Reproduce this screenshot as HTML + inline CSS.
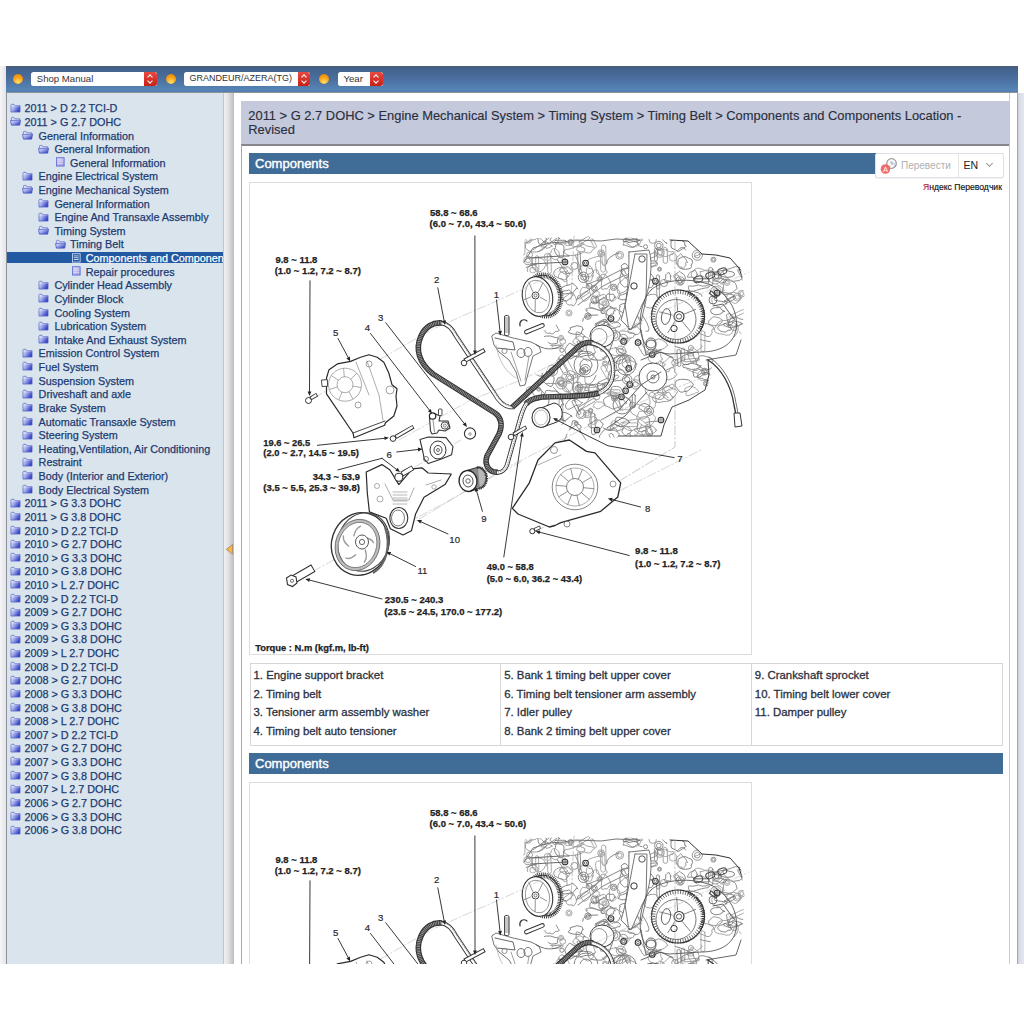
<!DOCTYPE html>
<html><head><meta charset="utf-8">
<style>
*{margin:0;padding:0;box-sizing:border-box}
html,body{width:1024px;height:1024px;background:#fff;overflow:hidden;font-family:"Liberation Sans",sans-serif;position:relative}
#leftedge{position:absolute;left:0;top:66px;width:6px;height:898px;background:linear-gradient(90deg,#f6f6f8,#e4e4e8)}
#toolbar{position:absolute;left:6px;top:66px;width:1012px;height:27px;background:linear-gradient(180deg,#4a5b70 0%,#41618a 8%,#4a6d9c 45%,#5585b6 92%,#5080b0 100%);border-bottom:1.5px solid #8e9196}
.orb{position:absolute;width:10px;height:10px;border-radius:50%;background:radial-gradient(circle at 50% 80%,#ffe070 0%,#f9a820 45%,#e07a00 100%);top:7.6px;box-shadow:0 0 1px rgba(0,0,0,.3)}
.sel-box{position:absolute;top:6px;height:13.5px;background:#fff;border-radius:2.5px;font-size:10px;color:#333;line-height:13.5px;padding-left:6px;white-space:nowrap;overflow:hidden}
.sel-box b{position:absolute;right:0;top:0;width:12.5px;height:13.5px;background:linear-gradient(180deg,#e9493e,#c52119);border-radius:0 2.5px 2.5px 0}
.sel-box b:before{content:"";position:absolute;left:4px;top:3px;width:3px;height:3px;border-left:1.1px solid #fff;border-top:1.1px solid #fff;transform:rotate(45deg)}
.sel-box b:after{content:"";position:absolute;left:4px;top:6.5px;width:3px;height:3px;border-right:1.1px solid #fff;border-bottom:1.1px solid #fff;transform:rotate(45deg)}
#sidebar{position:absolute;left:6px;top:93px;width:217px;height:870.5px;background:#dae4ec;border-left:1px solid #8d949c;overflow:hidden}
.row{position:absolute;left:0;width:217px;height:13.6px}
.row span{position:absolute;top:1.1px;font-size:10.8px;line-height:13.6px;color:#1b3b72;white-space:nowrap;-webkit-text-stroke:0.25px #1b3b72}
.row.sel{background:#2159a3;height:11px;margin-top:1.3px}
.row.sel span{color:#fff;-webkit-text-stroke:0.25px #fff;top:0.1px}
.row .ic{position:absolute;top:1.5px}
.row.sel .ic{top:0.2px}
#splitter{position:absolute;left:223px;top:93px;width:11px;height:870.5px;background:linear-gradient(90deg,#9ca1a8 0,#f0f0f2 10%,#e4e4e7 45%,#bcbcc1 100%)}
#content{position:absolute;left:241px;top:93px;width:769px;height:870.5px;background:#fff;border-right:1px solid #cacacc;overflow:hidden}
#cline{position:absolute;left:241px;top:145px;width:1px;height:818.5px;background:#a9a9ab}
#rightbar{position:absolute;left:1017px;top:93px;width:7px;height:870.5px;background:linear-gradient(90deg,#8e9298 0,#d8dce4 25%,#e3e6ee 100%)}
#hdr{position:absolute;left:0.3px;top:8px;width:768.7px;height:45px;background:#c4c9dc;border-bottom:2px solid #86878d;font-size:12.9px;line-height:14.3px;color:#2b2f3d;padding:7.5px 0 0 7px;-webkit-text-stroke:0.15px #2b2f3d}
.bar{position:absolute;left:8px;width:753.5px;height:21px;background:#3f6d97;color:#fff;font-size:13px;line-height:21px;padding-left:6px;-webkit-text-stroke:0.4px #fff}
.imgbox{position:absolute;left:8px;width:503px;height:473px;border:1px solid #dcdcdc;overflow:hidden;background:#fff}
table.parts{position:absolute;left:8.5px;top:569.5px;width:753px;height:83px;border-collapse:collapse;border:1px solid #d6d6d6}
table.parts td{vertical-align:top;border:1px solid #d6d6d6;font-size:11.4px;color:#2c3140;line-height:18.6px;padding:2.8px 0 0 3px;width:251px;-webkit-text-stroke:0.3px #2c3140}
#yw{position:absolute;left:634px;top:59.5px;width:128.5px;height:25.5px;background:#fff;border:1px solid #dde0e6;border-radius:2px;box-shadow:0 1px 1px rgba(0,0,0,.05)}
#yw .dv{position:absolute;left:82px;top:0;width:1px;height:23px;background:#e3e3e3}
#yw .tr{position:absolute;left:25px;top:0;line-height:23px;font-size:10px;color:#b0b0b0}
#yw .en{position:absolute;left:87.5px;top:0;line-height:23px;font-size:10.5px;color:#222}
#yw .chev{position:absolute;left:111px;top:7.5px;width:5px;height:5px;border-right:1px solid #999;border-bottom:1px solid #999;transform:rotate(45deg)}
#yn{position:absolute;left:682px;top:89px;font-size:8.6px;color:#111;-webkit-text-stroke:0.15px #111;white-space:nowrap}
#yn b{color:#f33;font-weight:normal}
.dg{position:absolute;left:-249.5px;top:-182.4px;font-family:"Liberation Sans",sans-serif}
</style></head><body>
<svg width="0" height="0" style="position:absolute">
 <defs>
  <linearGradient id="gfc" x1="0" y1="0" x2="1" y2="0.6"><stop offset="0" stop-color="#f2f3fd"/><stop offset="0.45" stop-color="#a6afe8"/><stop offset="1" stop-color="#3342c4"/></linearGradient>
  <linearGradient id="gfo" x1="0" y1="0" x2="1" y2="0.8"><stop offset="0" stop-color="#eef0fc"/><stop offset="0.5" stop-color="#9aa4e6"/><stop offset="1" stop-color="#3040c0"/></linearGradient>
  <linearGradient id="gdc" x1="0" y1="0" x2="1" y2="1"><stop offset="0" stop-color="#d7d6f4"/><stop offset="1" stop-color="#9d95dc"/></linearGradient>
 </defs>
 <symbol id="ifc" viewBox="0 0 12 11"><path d="M1,2.2 L1,10 L11,10 L11,2.8 L5,2.8 L4.2,1.4 L1.6,1.4 Z" fill="url(#gfc)" stroke="#5563cc" stroke-width="0.8"/><path d="M1.2,3.2 H10.8" stroke="#fff" stroke-width="0.6" opacity=".7"/></symbol>
 <symbol id="ifo" viewBox="0 0 12 11"><path d="M1.5,2 L1.5,9.8 L10.5,9.8 L10.5,3 L5,3 L4.3,1.5 L2,1.5 Z" fill="#dfe3f8" stroke="#6470cc" stroke-width="0.8"/><path d="M0.4,5 L11.6,4.4 L10.6,10 L1.6,10 Z" fill="url(#gfo)" stroke="#4a58c6" stroke-width="0.8"/></symbol>
 <symbol id="idc" viewBox="0 0 12 11"><rect x="1.5" y="0.8" width="8.5" height="9.2" fill="url(#gdc)" stroke="#5a6cd6" stroke-width="0.9"/><path d="M3,3.2 H8.5 M3,5.2 H8.5 M3,7.2 H8.5" stroke="#eceaff" stroke-width="0.7"/></symbol>
 <symbol id="ids" viewBox="0 0 12 11"><rect x="1.5" y="0.8" width="8.5" height="9.2" fill="none" stroke="#d8dcff" stroke-width="0.9"/><path d="M3,3.2 H8.5 M3,5.2 H8.5 M3,7.2 H8.5" stroke="#fff" stroke-width="0.8"/></symbol>
</svg>
<div id="leftedge"></div>
<div id="toolbar">
  <div class="orb" style="left:7px"></div>
  <div class="sel-box" style="left:25px;width:125.5px;padding-left:5.8px;font-size:9.6px">Shop Manual<b></b></div>
  <div class="orb" style="left:159.5px"></div>
  <div class="sel-box" style="left:178px;width:126px;padding-left:5.5px;font-size:9px">GRANDEUR/AZERA(TG)<b></b></div>
  <div class="orb" style="left:313px"></div>
  <div class="sel-box" style="left:331.5px;width:45px;padding-left:6px;font-size:9.6px">Year<b></b></div>
</div>
<div id="sidebar">
<div class="row" style="top:8.20px"><svg class="ic" style="left:3.4px" width="11" height="10" viewBox="0 0 12 11"><use href="#ifc"/></svg><span style="left:17.4px">2011 &gt; D 2.2 TCI-D</span></div>
<div class="row" style="top:21.82px"><svg class="ic" style="left:3.4px" width="11" height="10" viewBox="0 0 12 11"><use href="#ifo"/></svg><span style="left:17.4px">2011 &gt; G 2.7 DOHC</span></div>
<div class="row" style="top:35.44px"><svg class="ic" style="left:15.3px" width="11" height="10" viewBox="0 0 12 11"><use href="#ifo"/></svg><span style="left:31.6px">General Information</span></div>
<div class="row" style="top:49.06px"><svg class="ic" style="left:31.0px" width="11" height="10" viewBox="0 0 12 11"><use href="#ifo"/></svg><span style="left:47.4px">General Information</span></div>
<div class="row" style="top:62.68px"><svg class="ic" style="left:47.9px" width="11" height="10" viewBox="0 0 12 11"><use href="#idc"/></svg><span style="left:63.1px">General Information</span></div>
<div class="row" style="top:76.30px"><svg class="ic" style="left:15.3px" width="11" height="10" viewBox="0 0 12 11"><use href="#ifc"/></svg><span style="left:31.6px">Engine Electrical System</span></div>
<div class="row" style="top:89.92px"><svg class="ic" style="left:15.3px" width="11" height="10" viewBox="0 0 12 11"><use href="#ifo"/></svg><span style="left:31.6px">Engine Mechanical System</span></div>
<div class="row" style="top:103.54px"><svg class="ic" style="left:31.0px" width="11" height="10" viewBox="0 0 12 11"><use href="#ifc"/></svg><span style="left:47.4px">General Information</span></div>
<div class="row" style="top:117.16px"><svg class="ic" style="left:31.0px" width="11" height="10" viewBox="0 0 12 11"><use href="#ifc"/></svg><span style="left:47.4px">Engine And Transaxle Assembly</span></div>
<div class="row" style="top:130.78px"><svg class="ic" style="left:31.0px" width="11" height="10" viewBox="0 0 12 11"><use href="#ifo"/></svg><span style="left:47.4px">Timing System</span></div>
<div class="row" style="top:144.40px"><svg class="ic" style="left:47.9px" width="11" height="10" viewBox="0 0 12 11"><use href="#ifo"/></svg><span style="left:63.1px">Timing Belt</span></div>
<div class="row sel" style="top:158.02px"><svg class="ic" style="left:64.3px" width="11" height="10" viewBox="0 0 12 11"><use href="#ids"/></svg><span style="left:78.8px">Components and Components Location - Revised</span></div>
<div class="row" style="top:171.64px"><svg class="ic" style="left:64.3px" width="11" height="10" viewBox="0 0 12 11"><use href="#idc"/></svg><span style="left:78.8px">Repair procedures</span></div>
<div class="row" style="top:185.26px"><svg class="ic" style="left:31.0px" width="11" height="10" viewBox="0 0 12 11"><use href="#ifc"/></svg><span style="left:47.4px">Cylinder Head Assembly</span></div>
<div class="row" style="top:198.88px"><svg class="ic" style="left:31.0px" width="11" height="10" viewBox="0 0 12 11"><use href="#ifc"/></svg><span style="left:47.4px">Cylinder Block</span></div>
<div class="row" style="top:212.50px"><svg class="ic" style="left:31.0px" width="11" height="10" viewBox="0 0 12 11"><use href="#ifc"/></svg><span style="left:47.4px">Cooling System</span></div>
<div class="row" style="top:226.12px"><svg class="ic" style="left:31.0px" width="11" height="10" viewBox="0 0 12 11"><use href="#ifc"/></svg><span style="left:47.4px">Lubrication System</span></div>
<div class="row" style="top:239.74px"><svg class="ic" style="left:31.0px" width="11" height="10" viewBox="0 0 12 11"><use href="#ifc"/></svg><span style="left:47.4px">Intake And Exhaust System</span></div>
<div class="row" style="top:253.36px"><svg class="ic" style="left:15.3px" width="11" height="10" viewBox="0 0 12 11"><use href="#ifc"/></svg><span style="left:31.6px">Emission Control System</span></div>
<div class="row" style="top:266.98px"><svg class="ic" style="left:15.3px" width="11" height="10" viewBox="0 0 12 11"><use href="#ifc"/></svg><span style="left:31.6px">Fuel System</span></div>
<div class="row" style="top:280.60px"><svg class="ic" style="left:15.3px" width="11" height="10" viewBox="0 0 12 11"><use href="#ifc"/></svg><span style="left:31.6px">Suspension System</span></div>
<div class="row" style="top:294.22px"><svg class="ic" style="left:15.3px" width="11" height="10" viewBox="0 0 12 11"><use href="#ifc"/></svg><span style="left:31.6px">Driveshaft and axle</span></div>
<div class="row" style="top:307.84px"><svg class="ic" style="left:15.3px" width="11" height="10" viewBox="0 0 12 11"><use href="#ifc"/></svg><span style="left:31.6px">Brake System</span></div>
<div class="row" style="top:321.46px"><svg class="ic" style="left:15.3px" width="11" height="10" viewBox="0 0 12 11"><use href="#ifc"/></svg><span style="left:31.6px">Automatic Transaxle System</span></div>
<div class="row" style="top:335.08px"><svg class="ic" style="left:15.3px" width="11" height="10" viewBox="0 0 12 11"><use href="#ifc"/></svg><span style="left:31.6px">Steering System</span></div>
<div class="row" style="top:348.70px"><svg class="ic" style="left:15.3px" width="11" height="10" viewBox="0 0 12 11"><use href="#ifc"/></svg><span style="left:31.6px">Heating,Ventilation, Air Conditioning</span></div>
<div class="row" style="top:362.32px"><svg class="ic" style="left:15.3px" width="11" height="10" viewBox="0 0 12 11"><use href="#ifc"/></svg><span style="left:31.6px">Restraint</span></div>
<div class="row" style="top:375.94px"><svg class="ic" style="left:15.3px" width="11" height="10" viewBox="0 0 12 11"><use href="#ifc"/></svg><span style="left:31.6px">Body (Interior and Exterior)</span></div>
<div class="row" style="top:389.56px"><svg class="ic" style="left:15.3px" width="11" height="10" viewBox="0 0 12 11"><use href="#ifc"/></svg><span style="left:31.6px">Body Electrical System</span></div>
<div class="row" style="top:403.18px"><svg class="ic" style="left:3.4px" width="11" height="10" viewBox="0 0 12 11"><use href="#ifc"/></svg><span style="left:17.4px">2011 &gt; G 3.3 DOHC</span></div>
<div class="row" style="top:416.80px"><svg class="ic" style="left:3.4px" width="11" height="10" viewBox="0 0 12 11"><use href="#ifc"/></svg><span style="left:17.4px">2011 &gt; G 3.8 DOHC</span></div>
<div class="row" style="top:430.42px"><svg class="ic" style="left:3.4px" width="11" height="10" viewBox="0 0 12 11"><use href="#ifc"/></svg><span style="left:17.4px">2010 &gt; D 2.2 TCI-D</span></div>
<div class="row" style="top:444.04px"><svg class="ic" style="left:3.4px" width="11" height="10" viewBox="0 0 12 11"><use href="#ifc"/></svg><span style="left:17.4px">2010 &gt; G 2.7 DOHC</span></div>
<div class="row" style="top:457.66px"><svg class="ic" style="left:3.4px" width="11" height="10" viewBox="0 0 12 11"><use href="#ifc"/></svg><span style="left:17.4px">2010 &gt; G 3.3 DOHC</span></div>
<div class="row" style="top:471.28px"><svg class="ic" style="left:3.4px" width="11" height="10" viewBox="0 0 12 11"><use href="#ifc"/></svg><span style="left:17.4px">2010 &gt; G 3.8 DOHC</span></div>
<div class="row" style="top:484.90px"><svg class="ic" style="left:3.4px" width="11" height="10" viewBox="0 0 12 11"><use href="#ifc"/></svg><span style="left:17.4px">2010 &gt; L 2.7 DOHC</span></div>
<div class="row" style="top:498.52px"><svg class="ic" style="left:3.4px" width="11" height="10" viewBox="0 0 12 11"><use href="#ifc"/></svg><span style="left:17.4px">2009 &gt; D 2.2 TCI-D</span></div>
<div class="row" style="top:512.14px"><svg class="ic" style="left:3.4px" width="11" height="10" viewBox="0 0 12 11"><use href="#ifc"/></svg><span style="left:17.4px">2009 &gt; G 2.7 DOHC</span></div>
<div class="row" style="top:525.76px"><svg class="ic" style="left:3.4px" width="11" height="10" viewBox="0 0 12 11"><use href="#ifc"/></svg><span style="left:17.4px">2009 &gt; G 3.3 DOHC</span></div>
<div class="row" style="top:539.38px"><svg class="ic" style="left:3.4px" width="11" height="10" viewBox="0 0 12 11"><use href="#ifc"/></svg><span style="left:17.4px">2009 &gt; G 3.8 DOHC</span></div>
<div class="row" style="top:553.00px"><svg class="ic" style="left:3.4px" width="11" height="10" viewBox="0 0 12 11"><use href="#ifc"/></svg><span style="left:17.4px">2009 &gt; L 2.7 DOHC</span></div>
<div class="row" style="top:566.62px"><svg class="ic" style="left:3.4px" width="11" height="10" viewBox="0 0 12 11"><use href="#ifc"/></svg><span style="left:17.4px">2008 &gt; D 2.2 TCI-D</span></div>
<div class="row" style="top:580.24px"><svg class="ic" style="left:3.4px" width="11" height="10" viewBox="0 0 12 11"><use href="#ifc"/></svg><span style="left:17.4px">2008 &gt; G 2.7 DOHC</span></div>
<div class="row" style="top:593.86px"><svg class="ic" style="left:3.4px" width="11" height="10" viewBox="0 0 12 11"><use href="#ifc"/></svg><span style="left:17.4px">2008 &gt; G 3.3 DOHC</span></div>
<div class="row" style="top:607.48px"><svg class="ic" style="left:3.4px" width="11" height="10" viewBox="0 0 12 11"><use href="#ifc"/></svg><span style="left:17.4px">2008 &gt; G 3.8 DOHC</span></div>
<div class="row" style="top:621.10px"><svg class="ic" style="left:3.4px" width="11" height="10" viewBox="0 0 12 11"><use href="#ifc"/></svg><span style="left:17.4px">2008 &gt; L 2.7 DOHC</span></div>
<div class="row" style="top:634.72px"><svg class="ic" style="left:3.4px" width="11" height="10" viewBox="0 0 12 11"><use href="#ifc"/></svg><span style="left:17.4px">2007 &gt; D 2.2 TCI-D</span></div>
<div class="row" style="top:648.34px"><svg class="ic" style="left:3.4px" width="11" height="10" viewBox="0 0 12 11"><use href="#ifc"/></svg><span style="left:17.4px">2007 &gt; G 2.7 DOHC</span></div>
<div class="row" style="top:661.96px"><svg class="ic" style="left:3.4px" width="11" height="10" viewBox="0 0 12 11"><use href="#ifc"/></svg><span style="left:17.4px">2007 &gt; G 3.3 DOHC</span></div>
<div class="row" style="top:675.58px"><svg class="ic" style="left:3.4px" width="11" height="10" viewBox="0 0 12 11"><use href="#ifc"/></svg><span style="left:17.4px">2007 &gt; G 3.8 DOHC</span></div>
<div class="row" style="top:689.20px"><svg class="ic" style="left:3.4px" width="11" height="10" viewBox="0 0 12 11"><use href="#ifc"/></svg><span style="left:17.4px">2007 &gt; L 2.7 DOHC</span></div>
<div class="row" style="top:702.82px"><svg class="ic" style="left:3.4px" width="11" height="10" viewBox="0 0 12 11"><use href="#ifc"/></svg><span style="left:17.4px">2006 &gt; G 2.7 DOHC</span></div>
<div class="row" style="top:716.44px"><svg class="ic" style="left:3.4px" width="11" height="10" viewBox="0 0 12 11"><use href="#ifc"/></svg><span style="left:17.4px">2006 &gt; G 3.3 DOHC</span></div>
<div class="row" style="top:730.06px"><svg class="ic" style="left:3.4px" width="11" height="10" viewBox="0 0 12 11"><use href="#ifc"/></svg><span style="left:17.4px">2006 &gt; G 3.8 DOHC</span></div>
</div>
<div id="splitter"><svg style="position:absolute;left:2px;top:450.5px" width="8" height="11" viewBox="0 0 8 11"><path d="M7.5,0.5 L1.2,5.3 L7.5,10.3 Z" fill="#f6b448" stroke="#8a7a60" stroke-width="0.6"/></svg></div>
<div id="content">
  <div id="hdr">2011 &gt; G 2.7 DOHC &gt; Engine Mechanical System &gt; Timing System &gt; Timing Belt &gt; Components and Components Location -<br>Revised</div>
  <div class="bar" style="top:60px">Components</div>
  <div id="yw"><svg style="position:absolute;left:3px;top:3px" width="22" height="18" viewBox="0 0 22 18"><circle cx="12.5" cy="6.5" r="4.8" fill="#fff" stroke="#9a9a9a" stroke-width="1.3"/><text x="10.2" y="9" font-size="6" fill="#999" font-family="Liberation Sans">为</text><circle cx="6.5" cy="12" r="4.8" fill="#f26b6b"/><text x="3.9" y="14.7" font-size="7.5" fill="#fff" font-family="Liberation Sans">A</text></svg><span class="tr">Перевести</span><div class="dv"></div><span class="en">EN</span><div class="chev"></div></div>
  <div id="yn"><b>Я</b>ндекс Переводчик</div>
  <div class="imgbox" style="top:88.5px" id="img1"><svg class="dg" width="1024" height="1024" viewBox="0 0 1024 1024"><g id="diag"><polygon points="522.0,262.0 530.0,250.0 545.0,242.0 560.0,240.0 610.0,240.0 640.0,238.0 670.0,240.0 688.0,241.0 701.0,254.0 729.0,258.0 738.0,268.0 742.0,290.0 738.0,320.0 742.0,345.0 735.0,360.0 707.0,360.0 710.0,375.0 704.0,390.0 688.0,400.0 671.0,407.0 662.0,425.0 660.0,436.0 618.0,436.0 605.0,440.0 600.0,430.0 590.0,420.0 570.0,412.0 545.0,400.0 530.0,392.0 520.0,380.0 515.0,350.0 518.0,320.0 520.0,290.0" fill="#fff" stroke="none" stroke-width="0.0" stroke-linejoin="round" />
<clipPath id="hullclip"><polygon points="524.0,239.0 560.0,237.0 600.0,236.0 669.0,240.0 688.0,241.0 701.0,254.0 729.0,258.0 740.0,268.0 744.0,300.0 740.0,340.0 712.0,362.0 706.0,390.0 688.0,400.0 668.0,410.0 660.0,436.0 600.0,438.0 575.0,432.0 550.0,420.0 535.0,404.0 520.0,392.0 515.0,380.0 545.0,372.0 552.0,350.0 540.0,332.0 560.0,322.0 556.0,280.0 520.0,270.0"/></clipPath><g clip-path="url(#hullclip)">
<path d="M621.8,348.8 Q616.8,353.7 630.0,338.2" fill="none" stroke="#999999" stroke-width="0.85" stroke-linejoin="round" stroke-linecap="round" />
<circle cx="627.0" cy="359.6" r="2.9" fill="none" stroke="#999999" stroke-width="0.8" />
<circle cx="627.0" cy="359.6" r="1.6" fill="none" stroke="#999999" stroke-width="0.75" />
<circle cx="702.2" cy="375.3" r="5.4" fill="none" stroke="#999999" stroke-width="0.8" />
<circle cx="658.5" cy="269.2" r="2.0" fill="none" stroke="#7c7c7c" stroke-width="0.8" />
<circle cx="658.5" cy="269.2" r="1.1" fill="none" stroke="#7c7c7c" stroke-width="0.75" />
<path d="M582.0,243.6 Q579.2,243.9 580.4,244.9 Q576.4,244.0 574.3,246.8 Q568.6,244.6 566.7,245.5 Q560.6,245.0 566.6,242.5 Q568.0,243.8 574.6,240.9 Q576.9,239.8 580.8,242.1 Z" fill="none" stroke="#999999" stroke-width="0.85" stroke-linejoin="round" stroke-linecap="round" />
<path d="M652.7,278.4 Q650.5,279.2 651.3,279.5 Q647.6,280.1 648.0,280.7 Q644.5,279.4 644.9,278.8 Q646.5,278.6 644.4,274.9 Q644.0,275.4 647.4,272.6 Q647.8,271.4 651.1,275.2 Z" fill="none" stroke="#6e6e6e" stroke-width="0.85" stroke-linejoin="round" stroke-linecap="round" />
<path d="M576.6,288.4 Q575.5,286.8 574.0,290.4 Q572.1,293.9 567.1,293.4 Q560.7,295.0 559.9,292.1 Q557.2,291.1 560.9,287.6 Q564.1,285.2 569.0,284.7 Q570.7,281.3 574.9,286.2 Z" fill="none" stroke="#6e6e6e" stroke-width="0.85" stroke-linejoin="round" stroke-linecap="round" />
<path d="M577.4,384.5 L593.3,384.5 A1.5,1.5 0 0 1 593.3,387.6 L577.4,387.6 A1.5,1.5 0 0 1 577.4,384.5 Z" fill="none" stroke="#999999" stroke-width="0.8" stroke-linejoin="round" stroke-linecap="round" />
<circle cx="559.5" cy="380.6" r="3.6" fill="none" stroke="#8a8a8a" stroke-width="0.8" />
<circle cx="658.6" cy="252.7" r="4.6" fill="none" stroke="#8a8a8a" stroke-width="0.8" />
<circle cx="658.6" cy="252.7" r="2.5" fill="none" stroke="#8a8a8a" stroke-width="0.75" />
<circle cx="612.6" cy="287.3" r="3.2" fill="none" stroke="#6e6e6e" stroke-width="0.8" />
<circle cx="612.6" cy="287.3" r="1.7" fill="none" stroke="#6e6e6e" stroke-width="0.75" />
<path d="M675.8,374.8 Q673.0,377.4 673.6,377.4 Q672.8,377.7 667.8,380.1 Q667.1,379.3 662.3,378.2 Q657.7,376.0 662.0,373.0 Q661.3,372.0 667.7,368.9 Q674.4,365.2 673.7,371.4 Z" fill="none" stroke="#8a8a8a" stroke-width="0.85" stroke-linejoin="round" stroke-linecap="round" />
<path d="M641.7,239.7 Q638.9,240.3 638.8,244.1 Q635.8,247.0 631.9,247.3 Q629.0,245.9 625.6,243.1 Q624.1,242.7 625.3,237.1 Q625.6,231.1 631.5,233.9 Q634.8,234.8 638.9,236.7 Z" fill="none" stroke="#999999" stroke-width="0.85" stroke-linejoin="round" stroke-linecap="round" />
<path d="M565.6,271.6 Q564.1,267.6 566.3,285.5" fill="none" stroke="#999999" stroke-width="0.85" stroke-linejoin="round" stroke-linecap="round" />
<path d="M672.5,397.3 Q670.8,396.8 671.0,399.3 Q670.3,401.3 662.0,401.7 Q653.4,404.2 651.6,399.4 Q651.6,396.3 653.2,395.1 Q655.0,390.8 662.4,393.4 Q669.5,390.4 669.9,395.2 Z" fill="none" stroke="#8a8a8a" stroke-width="0.85" stroke-linejoin="round" stroke-linecap="round" />
<path d="M679.4,351.0 L679.9,364.7 A1.7,1.7 0 0 1 676.5,364.8 L676.0,351.1 A1.7,1.7 0 0 1 679.4,351.0 Z" fill="none" stroke="#7c7c7c" stroke-width="0.8" stroke-linejoin="round" stroke-linecap="round" />
<circle cx="573.4" cy="265.9" r="3.5" fill="none" stroke="#7c7c7c" stroke-width="0.8" />
<path d="M667.4,397.9 Q662.2,390.0 657.1,399.5" fill="none" stroke="#8a8a8a" stroke-width="0.85" stroke-linejoin="round" stroke-linecap="round" />
<circle cx="626.2" cy="379.4" r="4.7" fill="none" stroke="#6e6e6e" stroke-width="0.8" />
<circle cx="626.2" cy="379.4" r="2.6" fill="none" stroke="#6e6e6e" stroke-width="0.75" />
<path d="M733.0,337.1 Q739.5,330.5 736.3,324.8" fill="none" stroke="#8a8a8a" stroke-width="0.85" stroke-linejoin="round" stroke-linecap="round" />
<path d="M557.4,328.9 Q560.3,331.8 554.5,331.3 Q551.8,335.4 548.8,333.0 Q545.0,334.7 543.5,329.7 Q543.0,326.2 543.3,324.2 Q543.2,321.0 549.2,320.9 Q553.0,322.1 555.0,324.7 Z" fill="none" stroke="#7c7c7c" stroke-width="0.85" stroke-linejoin="round" stroke-linecap="round" />
<path d="M637.9,243.7 Q639.5,243.3 635.1,245.1 Q632.6,248.6 627.9,246.6 Q623.9,244.6 622.5,245.1 Q621.5,246.0 623.2,241.9 Q623.5,241.3 629.5,240.4 Q636.8,242.8 636.0,242.1 Z" fill="none" stroke="#7c7c7c" stroke-width="0.85" stroke-linejoin="round" stroke-linecap="round" />
<path d="M551.8,345.9 L560.1,345.1 A1.4,1.4 0 0 1 560.4,347.8 L552.0,348.6 A1.4,1.4 0 0 1 551.8,345.9 Z" fill="none" stroke="#999999" stroke-width="0.8" stroke-linejoin="round" stroke-linecap="round" />
<path d="M641.1,246.7 Q634.2,247.3 636.1,233.8" fill="none" stroke="#7c7c7c" stroke-width="0.85" stroke-linejoin="round" stroke-linecap="round" />
<path d="M613.1,427.5 Q610.5,433.9 602.2,427.9" fill="none" stroke="#6e6e6e" stroke-width="0.85" stroke-linejoin="round" stroke-linecap="round" />
<path d="M638.1,259.5 L653.6,252.3 A2.0,2.0 0 0 1 655.3,255.8 L639.8,263.0 A2.0,2.0 0 0 1 638.1,259.5 Z" fill="none" stroke="#7c7c7c" stroke-width="0.8" stroke-linejoin="round" stroke-linecap="round" />
<path d="M555.0,240.3 L563.9,240.3 A1.4,1.4 0 0 1 563.9,243.1 L555.0,243.1 A1.4,1.4 0 0 1 555.0,240.3 Z" fill="none" stroke="#6e6e6e" stroke-width="0.8" stroke-linejoin="round" stroke-linecap="round" />
<path d="M691.3,263.1 Q689.1,265.6 690.5,266.5 Q690.5,269.1 684.4,269.3 Q677.2,269.1 676.8,264.9 Q677.0,259.4 677.1,259.4 Q681.3,255.7 684.7,256.7 Q687.3,258.1 690.5,259.4 Z" fill="none" stroke="#6e6e6e" stroke-width="0.85" stroke-linejoin="round" stroke-linecap="round" />
<path d="M549.8,255.5 L550.4,271.4 A1.8,1.8 0 0 1 546.8,271.6 L546.2,255.6 A1.8,1.8 0 0 1 549.8,255.5 Z" fill="none" stroke="#999999" stroke-width="0.8" stroke-linejoin="round" stroke-linecap="round" />
<path d="M684.3,277.3 Q684.9,279.7 682.9,280.5 Q681.4,281.9 678.9,283.2 Q673.9,280.6 674.6,279.4 Q670.9,274.9 674.9,274.0 Q677.8,272.4 678.6,271.3 Q678.2,271.8 682.3,274.0 Z" fill="none" stroke="#7c7c7c" stroke-width="0.85" stroke-linejoin="round" stroke-linecap="round" />
<path d="M537.5,257.1 L537.9,269.3 A1.5,1.5 0 0 1 535.0,269.4 L534.5,257.3 A1.5,1.5 0 0 1 537.5,257.1 Z" fill="none" stroke="#999999" stroke-width="0.8" stroke-linejoin="round" stroke-linecap="round" />
<circle cx="604.0" cy="363.5" r="2.5" fill="none" stroke="#8a8a8a" stroke-width="0.8" />
<circle cx="604.0" cy="363.5" r="1.4" fill="none" stroke="#8a8a8a" stroke-width="0.75" />
<path d="M571.9,271.3 Q569.9,273.9 569.4,273.1 Q564.6,273.8 564.0,274.0 Q561.3,272.3 559.5,271.8 Q557.5,268.7 559.8,269.2 Q559.8,266.0 564.1,267.4 Q568.4,265.7 569.3,269.1 Z" fill="none" stroke="#7c7c7c" stroke-width="0.85" stroke-linejoin="round" stroke-linecap="round" />
<circle cx="736.3" cy="297.2" r="3.9" fill="none" stroke="#999999" stroke-width="0.8" />
<circle cx="736.3" cy="297.2" r="2.1" fill="none" stroke="#999999" stroke-width="0.75" />
<path d="M618.3,434.2 Q618.3,437.0 614.7,438.5 Q611.6,445.8 607.7,442.3 Q605.1,443.6 601.3,439.3 Q595.8,437.6 600.3,433.6 Q603.8,427.4 608.2,429.5 Q616.8,426.9 616.2,431.5 Z" fill="none" stroke="#7c7c7c" stroke-width="0.85" stroke-linejoin="round" stroke-linecap="round" />
<path d="M633.1,271.0 Q633.9,270.5 631.8,273.8 Q631.5,273.8 626.7,276.2 Q621.9,275.3 620.5,273.2 Q618.6,271.7 621.0,269.0 Q622.9,269.4 627.4,267.0 Q629.1,267.7 631.9,268.7 Z" fill="none" stroke="#7c7c7c" stroke-width="0.85" stroke-linejoin="round" stroke-linecap="round" />
<circle cx="576.5" cy="387.6" r="5.3" fill="none" stroke="#7c7c7c" stroke-width="0.8" />
<path d="M630.7,430.8 Q632.6,428.6 629.0,433.1 Q626.0,433.2 625.6,435.6 Q623.7,435.7 622.3,433.8 Q619.6,432.0 621.9,429.2 Q625.3,425.0 625.4,426.3 Q628.3,427.5 629.2,428.5 Z" fill="none" stroke="#7c7c7c" stroke-width="0.85" stroke-linejoin="round" stroke-linecap="round" />
<path d="M677.3,275.6 L681.4,282.8 A1.8,1.8 0 0 1 678.4,284.5 L674.2,277.4 A1.8,1.8 0 0 1 677.3,275.6 Z" fill="none" stroke="#8a8a8a" stroke-width="0.8" stroke-linejoin="round" stroke-linecap="round" />
<path d="M669.8,276.2 Q669.8,274.0 669.4,278.1 Q671.2,281.8 666.5,280.7 Q663.6,283.3 663.7,279.4 Q665.5,278.9 664.6,274.9 Q665.3,274.0 667.1,272.8 Q667.9,271.0 669.2,274.7 Z" fill="none" stroke="#7c7c7c" stroke-width="0.85" stroke-linejoin="round" stroke-linecap="round" />
<path d="M562.4,404.8 Q559.9,403.1 560.2,406.6 Q559.0,405.8 554.3,408.2 Q549.4,409.3 548.3,406.4 Q547.1,403.6 547.9,400.7 Q547.7,395.6 554.3,396.1 Q560.1,394.9 560.6,400.3 Z" fill="none" stroke="#6e6e6e" stroke-width="0.85" stroke-linejoin="round" stroke-linecap="round" />
<path d="M553.1,377.9 Q553.5,379.7 552.3,382.3 Q551.7,388.8 546.9,385.2 Q542.8,381.7 541.0,381.2 Q541.1,381.1 541.0,375.6 Q541.3,369.4 545.9,372.5 Q549.3,373.0 551.2,375.3 Z" fill="none" stroke="#6e6e6e" stroke-width="0.85" stroke-linejoin="round" stroke-linecap="round" />
<path d="M651.0,429.9 Q652.6,430.0 651.0,432.4 Q652.6,434.2 648.3,433.9 Q644.6,435.8 644.8,431.0 Q645.2,429.0 644.9,426.1 Q645.9,424.4 647.4,423.8 Q650.5,427.1 650.1,427.2 Z" fill="none" stroke="#999999" stroke-width="0.85" stroke-linejoin="round" stroke-linecap="round" />
<path d="M625.5,403.2 Q623.5,401.4 621.4,406.0 Q616.7,407.6 611.3,409.1 Q608.2,406.7 603.9,405.6 Q601.3,399.5 603.7,398.1 Q605.9,396.0 611.9,395.2 Q616.8,393.4 622.2,399.6 Z" fill="none" stroke="#7c7c7c" stroke-width="0.85" stroke-linejoin="round" stroke-linecap="round" />
<path d="M623.2,353.6 Q621.0,355.1 627.0,364.8" fill="none" stroke="#7c7c7c" stroke-width="0.85" stroke-linejoin="round" stroke-linecap="round" />
<path d="M634.4,325.5 Q631.4,326.3 634.9,315.4" fill="none" stroke="#999999" stroke-width="0.85" stroke-linejoin="round" stroke-linecap="round" />
<path d="M703.9,332.9 L703.9,349.9 A1.9,1.9 0 0 1 700.0,349.9 L700.0,332.9 A1.9,1.9 0 0 1 703.9,332.9 Z" fill="none" stroke="#999999" stroke-width="0.8" stroke-linejoin="round" stroke-linecap="round" />
<path d="M693.6,256.3 Q698.5,254.5 701.8,253.5" fill="none" stroke="#999999" stroke-width="0.85" stroke-linejoin="round" stroke-linecap="round" />
<path d="M638.7,340.1 L645.7,352.2 A2.1,2.1 0 0 1 641.9,354.3 L635.0,342.3 A2.1,2.1 0 0 1 638.7,340.1 Z" fill="none" stroke="#7c7c7c" stroke-width="0.8" stroke-linejoin="round" stroke-linecap="round" />
<path d="M630.3,285.5 Q628.2,283.2 626.9,288.9 Q622.6,293.0 620.1,292.9 Q616.9,295.8 616.3,290.1 Q617.1,284.3 617.2,284.1 Q619.9,281.7 621.7,279.7 Q624.9,275.2 627.6,281.8 Z" fill="none" stroke="#8a8a8a" stroke-width="0.85" stroke-linejoin="round" stroke-linecap="round" />
<path d="M566.7,276.3 Q566.1,276.0 565.5,278.8 Q567.0,283.3 562.3,280.9 Q561.3,277.5 558.6,278.6 Q556.0,278.0 558.4,273.9 Q558.5,271.4 562.4,271.7 Q564.4,269.3 565.7,274.3 Z" fill="none" stroke="#999999" stroke-width="0.85" stroke-linejoin="round" stroke-linecap="round" />
<path d="M566.5,360.0 L574.6,375.2 A2.2,2.2 0 0 1 570.7,377.3 L562.6,362.1 A2.2,2.2 0 0 1 566.5,360.0 Z" fill="none" stroke="#999999" stroke-width="0.8" stroke-linejoin="round" stroke-linecap="round" />
<circle cx="689.9" cy="348.0" r="2.5" fill="none" stroke="#8a8a8a" stroke-width="0.8" />
<path d="M602.1,424.2 Q601.7,425.8 600.7,426.9 Q598.2,431.5 595.5,429.3 Q594.3,426.9 589.3,427.6 Q585.1,424.0 589.2,423.8 Q592.8,421.4 594.5,420.1 Q599.9,419.4 599.7,421.4 Z" fill="none" stroke="#6e6e6e" stroke-width="0.85" stroke-linejoin="round" stroke-linecap="round" />
<path d="M683.6,359.4 L697.4,358.2 A1.3,1.3 0 0 1 697.7,360.7 L683.8,361.9 A1.3,1.3 0 0 1 683.6,359.4 Z" fill="none" stroke="#8a8a8a" stroke-width="0.8" stroke-linejoin="round" stroke-linecap="round" />
<path d="M601.9,305.5 Q604.5,308.5 601.2,307.5 Q601.7,312.1 595.7,309.6 Q591.3,306.9 589.2,307.9 Q588.4,307.7 589.0,304.0 Q588.4,301.8 594.3,302.4 Q597.6,301.8 600.0,304.2 Z" fill="none" stroke="#7c7c7c" stroke-width="0.85" stroke-linejoin="round" stroke-linecap="round" />
<path d="M584.2,412.9 Q585.8,412.1 582.9,415.3 Q579.5,418.2 578.6,418.5 Q577.5,419.0 575.4,416.2 Q574.7,414.9 576.9,410.9 Q581.0,411.6 580.7,408.3 Q580.8,409.5 583.6,410.4 Z" fill="none" stroke="#8a8a8a" stroke-width="0.85" stroke-linejoin="round" stroke-linecap="round" />
<path d="M663.6,364.0 Q666.3,364.6 662.1,366.5 Q660.4,368.4 658.3,369.0 Q656.7,370.2 654.7,366.9 Q654.9,366.2 655.0,362.8 Q656.5,364.0 658.7,361.0 Q662.9,363.1 662.2,362.5 Z" fill="none" stroke="#8a8a8a" stroke-width="0.85" stroke-linejoin="round" stroke-linecap="round" />
<path d="M619.3,324.7 Q618.9,324.7 618.6,326.8 Q617.4,326.1 612.1,328.8 Q607.3,329.0 604.4,326.3 Q601.0,322.5 604.9,321.4 Q606.5,317.5 610.7,319.5 Q611.6,322.3 616.7,322.3 Z" fill="none" stroke="#6e6e6e" stroke-width="0.85" stroke-linejoin="round" stroke-linecap="round" />
<path d="M721.7,320.8 Q721.4,321.0 720.1,323.0 Q716.3,326.3 713.7,325.6 Q707.3,324.8 707.9,323.7 Q706.6,320.4 709.5,319.7 Q711.2,315.7 715.3,317.2 Q720.0,318.2 720.0,318.7 Z" fill="none" stroke="#8a8a8a" stroke-width="0.85" stroke-linejoin="round" stroke-linecap="round" />
<path d="M717.7,278.1 Q715.4,277.7 723.1,269.3" fill="none" stroke="#7c7c7c" stroke-width="0.85" stroke-linejoin="round" stroke-linecap="round" />
<path d="M558.7,412.2 Q565.9,419.8 559.9,426.5" fill="none" stroke="#8a8a8a" stroke-width="0.85" stroke-linejoin="round" stroke-linecap="round" />
<path d="M581.6,321.2 Q580.7,314.5 596.7,315.0" fill="none" stroke="#6e6e6e" stroke-width="0.85" stroke-linejoin="round" stroke-linecap="round" />
<path d="M575.6,298.8 Q576.6,298.6 575.0,302.4 Q571.9,308.4 571.1,304.8 Q565.3,306.1 565.1,301.2 Q559.4,299.3 565.4,296.0 Q568.7,292.8 570.3,293.4 Q572.6,291.6 573.9,296.2 Z" fill="none" stroke="#8a8a8a" stroke-width="0.85" stroke-linejoin="round" stroke-linecap="round" />
<circle cx="560.3" cy="383.4" r="5.5" fill="none" stroke="#8a8a8a" stroke-width="0.8" />
<circle cx="560.3" cy="383.4" r="3.0" fill="none" stroke="#8a8a8a" stroke-width="0.75" />
<path d="M623.9,386.6 L629.7,383.3 A1.8,1.8 0 0 1 631.5,386.4 L625.7,389.7 A1.8,1.8 0 0 1 623.9,386.6 Z" fill="none" stroke="#999999" stroke-width="0.8" stroke-linejoin="round" stroke-linecap="round" />
<path d="M676.4,391.9 Q674.6,394.7 674.2,396.0 Q669.4,399.8 668.0,400.5 Q666.3,399.8 662.3,396.7 Q661.3,393.1 661.8,388.7 Q664.8,385.0 667.5,386.2 Q673.5,389.7 674.3,389.7 Z" fill="none" stroke="#8a8a8a" stroke-width="0.85" stroke-linejoin="round" stroke-linecap="round" />
<circle cx="527.0" cy="260.6" r="4.1" fill="none" stroke="#8a8a8a" stroke-width="0.8" />
<circle cx="527.0" cy="260.6" r="2.3" fill="none" stroke="#8a8a8a" stroke-width="0.75" />
<path d="M625.9,376.1 Q628.6,373.9 623.1,378.1 Q621.9,380.6 615.3,380.7 Q608.0,382.9 608.0,378.5 Q606.0,378.4 608.0,373.2 Q607.1,370.3 616.1,370.5 Q622.3,367.8 624.0,373.2 Z" fill="none" stroke="#6e6e6e" stroke-width="0.85" stroke-linejoin="round" stroke-linecap="round" />
<path d="M645.1,331.4 Q652.7,333.2 641.8,315.6" fill="none" stroke="#7c7c7c" stroke-width="0.85" stroke-linejoin="round" stroke-linecap="round" />
<path d="M586.5,261.5 Q584.4,258.9 598.9,256.0" fill="none" stroke="#999999" stroke-width="0.85" stroke-linejoin="round" stroke-linecap="round" />
<path d="M666.2,249.6 L666.6,261.1 A2.2,2.2 0 0 1 662.2,261.3 L661.8,249.7 A2.2,2.2 0 0 1 666.2,249.6 Z" fill="none" stroke="#8a8a8a" stroke-width="0.8" stroke-linejoin="round" stroke-linecap="round" />
<circle cx="568.0" cy="313.0" r="3.1" fill="none" stroke="#999999" stroke-width="0.8" />
<circle cx="568.0" cy="313.0" r="1.7" fill="none" stroke="#999999" stroke-width="0.75" />
<circle cx="643.6" cy="270.4" r="4.0" fill="none" stroke="#8a8a8a" stroke-width="0.8" />
<path d="M634.4,334.9 Q633.6,332.8 632.5,336.7 Q633.3,337.7 626.9,338.2 Q624.7,339.1 620.1,336.7 Q619.5,332.6 618.0,333.1 Q617.9,329.9 625.3,331.3 Q629.2,334.4 633.1,333.5 Z" fill="none" stroke="#8a8a8a" stroke-width="0.85" stroke-linejoin="round" stroke-linecap="round" />
<path d="M598.4,390.6 Q597.7,392.9 597.0,392.8 Q597.7,395.3 593.2,395.7 Q590.5,394.2 588.4,393.5 Q586.1,389.8 588.0,387.7 Q587.5,383.9 592.9,384.7 Q596.6,382.6 597.1,387.7 Z" fill="none" stroke="#7c7c7c" stroke-width="0.85" stroke-linejoin="round" stroke-linecap="round" />
<path d="M638.1,240.7 Q640.7,239.5 635.4,241.6 Q633.8,240.8 628.1,242.6 Q626.1,241.0 622.1,241.4 Q622.4,239.0 623.3,238.9 Q627.1,238.0 629.5,237.6 Q634.7,239.8 635.7,239.0 Z" fill="none" stroke="#6e6e6e" stroke-width="0.85" stroke-linejoin="round" stroke-linecap="round" />
<path d="M577.8,406.9 L592.4,398.5 A1.6,1.6 0 0 1 594.0,401.3 L579.4,409.7 A1.6,1.6 0 0 1 577.8,406.9 Z" fill="none" stroke="#7c7c7c" stroke-width="0.8" stroke-linejoin="round" stroke-linecap="round" />
<circle cx="593.2" cy="288.2" r="3.0" fill="none" stroke="#6e6e6e" stroke-width="0.8" />
<circle cx="593.2" cy="288.2" r="1.6" fill="none" stroke="#6e6e6e" stroke-width="0.75" />
<path d="M586.9,399.4 Q593.3,391.9 580.0,410.0" fill="none" stroke="#999999" stroke-width="0.85" stroke-linejoin="round" stroke-linecap="round" />
<circle cx="679.1" cy="280.9" r="4.1" fill="none" stroke="#7c7c7c" stroke-width="0.8" />
<circle cx="679.1" cy="280.9" r="2.3" fill="none" stroke="#7c7c7c" stroke-width="0.75" />
<path d="M618.9,291.5 Q619.2,290.8 617.8,295.3 Q615.0,299.1 613.0,300.8 Q610.3,302.7 608.6,298.0 Q608.6,294.0 608.3,289.4 Q610.9,287.9 612.2,286.2 Q614.5,286.3 617.2,289.4 Z" fill="none" stroke="#999999" stroke-width="0.85" stroke-linejoin="round" stroke-linecap="round" />
<path d="M726.9,300.9 Q725.0,301.0 725.3,304.4 Q721.5,305.2 719.3,307.4 Q712.3,304.6 711.7,303.9 Q709.8,298.6 712.0,297.2 Q715.2,295.2 719.2,293.2 Q722.8,290.9 724.9,296.9 Z" fill="none" stroke="#999999" stroke-width="0.85" stroke-linejoin="round" stroke-linecap="round" />
<path d="M634.2,395.7 L634.2,406.1 A1.4,1.4 0 0 1 631.3,406.1 L631.3,395.7 A1.4,1.4 0 0 1 634.2,395.7 Z" fill="none" stroke="#6e6e6e" stroke-width="0.8" stroke-linejoin="round" stroke-linecap="round" />
<path d="M721.7,279.0 Q724.6,276.9 719.1,281.8 Q717.6,284.1 713.1,284.0 Q710.5,282.7 707.6,280.8 Q708.1,281.2 707.2,276.8 Q706.2,276.7 713.6,274.0 Q716.0,269.9 720.0,275.8 Z" fill="none" stroke="#8a8a8a" stroke-width="0.85" stroke-linejoin="round" stroke-linecap="round" />
<path d="M584.4,382.8 Q589.7,388.5 595.0,375.5" fill="none" stroke="#7c7c7c" stroke-width="0.85" stroke-linejoin="round" stroke-linecap="round" />
<path d="M563.1,251.1 Q562.7,249.0 562.3,254.8 Q563.9,257.1 559.0,257.8 Q556.9,255.8 554.8,253.7 Q552.4,249.2 554.6,247.3 Q553.7,242.5 559.6,244.3 Q563.3,244.7 563.0,247.7 Z" fill="none" stroke="#6e6e6e" stroke-width="0.85" stroke-linejoin="round" stroke-linecap="round" />
<path d="M558.8,238.6 Q556.9,237.3 557.1,241.2 Q553.8,245.7 554.1,243.8 Q553.3,246.4 551.4,241.5 Q547.2,241.4 550.7,237.2 Q554.2,235.3 553.9,235.6 Q557.3,234.6 557.5,237.3 Z" fill="none" stroke="#7c7c7c" stroke-width="0.85" stroke-linejoin="round" stroke-linecap="round" />
<path d="M602.0,389.8 L617.5,389.8 A1.6,1.6 0 0 1 617.5,393.1 L602.0,393.1 A1.6,1.6 0 0 1 602.0,389.8 Z" fill="none" stroke="#8a8a8a" stroke-width="0.8" stroke-linejoin="round" stroke-linecap="round" />
<path d="M610.5,377.6 L616.1,375.1 A1.5,1.5 0 0 1 617.3,377.7 L611.8,380.3 A1.5,1.5 0 0 1 610.5,377.6 Z" fill="none" stroke="#7c7c7c" stroke-width="0.8" stroke-linejoin="round" stroke-linecap="round" />
<path d="M614.0,310.8 Q612.0,310.0 612.8,313.7 Q609.7,313.6 608.0,316.0 Q603.7,312.7 602.6,313.5 Q598.4,314.4 601.7,309.4 Q604.5,308.8 606.5,306.8 Q607.7,304.4 612.3,308.6 Z" fill="none" stroke="#6e6e6e" stroke-width="0.85" stroke-linejoin="round" stroke-linecap="round" />
<path d="M659.6,303.1 Q656.9,303.8 657.3,305.1 Q654.1,306.8 649.5,308.1 Q645.2,308.5 643.1,304.9 Q645.0,303.3 643.2,297.9 Q642.0,296.5 650.0,294.4 Q657.2,293.3 657.7,298.4 Z" fill="none" stroke="#8a8a8a" stroke-width="0.85" stroke-linejoin="round" stroke-linecap="round" />
<path d="M631.5,403.7 Q632.9,406.6 630.2,406.4 Q628.4,411.4 624.6,409.3 Q617.9,412.3 619.2,406.1 Q618.2,401.2 618.8,399.6 Q621.3,397.4 624.5,397.7 Q632.3,401.0 630.6,401.3 Z" fill="none" stroke="#999999" stroke-width="0.85" stroke-linejoin="round" stroke-linecap="round" />
<path d="M699.5,339.3 Q697.0,339.6 709.4,341.7" fill="none" stroke="#7c7c7c" stroke-width="0.85" stroke-linejoin="round" stroke-linecap="round" />
<circle cx="598.5" cy="279.1" r="2.5" fill="none" stroke="#999999" stroke-width="0.8" />
<circle cx="598.5" cy="279.1" r="1.4" fill="none" stroke="#999999" stroke-width="0.75" />
<path d="M672.9,252.6 Q671.6,252.1 671.5,254.6 Q670.7,253.8 665.0,256.7 Q661.1,256.4 658.0,254.4 Q655.9,249.7 656.6,250.6 Q658.0,249.2 664.0,249.7 Q669.7,253.1 671.8,251.5 Z" fill="none" stroke="#999999" stroke-width="0.85" stroke-linejoin="round" stroke-linecap="round" />
<path d="M714.4,376.0 Q712.6,377.3 712.0,378.1 Q711.9,381.7 705.3,380.1 Q699.2,377.5 698.2,378.5 Q694.0,376.2 697.7,375.1 Q700.7,371.9 703.0,373.4 Q703.7,371.3 710.2,374.8 Z" fill="none" stroke="#6e6e6e" stroke-width="0.85" stroke-linejoin="round" stroke-linecap="round" />
<circle cx="614.0" cy="335.5" r="5.0" fill="none" stroke="#7c7c7c" stroke-width="0.8" />
<circle cx="614.0" cy="335.5" r="2.8" fill="none" stroke="#7c7c7c" stroke-width="0.75" />
<path d="M622.4,422.9 L635.6,422.9 A1.9,1.9 0 0 1 635.6,426.6 L622.4,426.6 A1.9,1.9 0 0 1 622.4,422.9 Z" fill="none" stroke="#999999" stroke-width="0.8" stroke-linejoin="round" stroke-linecap="round" />
<path d="M607.9,304.4 Q605.5,306.8 606.6,306.6 Q602.7,307.9 602.2,308.7 Q598.4,310.1 598.0,306.5 Q597.9,303.3 598.2,300.1 Q602.0,298.7 602.8,296.9 Q603.2,298.5 607.0,301.1 Z" fill="none" stroke="#6e6e6e" stroke-width="0.85" stroke-linejoin="round" stroke-linecap="round" />
<path d="M632.0,308.6 Q634.6,308.7 631.8,312.2 Q632.1,315.7 627.0,315.2 Q624.4,314.8 621.0,312.1 Q617.1,311.3 619.3,306.1 Q616.0,305.5 624.8,302.8 Q631.8,304.6 631.3,305.7 Z" fill="none" stroke="#6e6e6e" stroke-width="0.85" stroke-linejoin="round" stroke-linecap="round" />
<path d="M738.2,331.8 Q744.0,338.9 751.8,333.2" fill="none" stroke="#999999" stroke-width="0.85" stroke-linejoin="round" stroke-linecap="round" />
<path d="M609.4,344.8 Q609.9,342.9 607.0,345.6 Q602.1,344.2 598.9,346.7 Q595.7,348.9 591.5,345.7 Q589.7,342.2 591.2,342.7 Q593.1,339.1 599.1,340.6 Q606.2,342.9 607.4,342.5 Z" fill="none" stroke="#7c7c7c" stroke-width="0.85" stroke-linejoin="round" stroke-linecap="round" />
<path d="M686.3,262.4 Q683.7,260.9 685.0,265.1 Q681.3,270.4 681.4,267.6 Q678.0,267.2 676.4,264.8 Q674.6,264.7 675.6,257.7 Q680.2,253.4 679.8,253.7 Q682.1,256.9 684.2,258.4 Z" fill="none" stroke="#8a8a8a" stroke-width="0.85" stroke-linejoin="round" stroke-linecap="round" />
<path d="M614.1,297.7 Q615.4,294.8 612.6,298.9 Q610.2,302.8 609.0,300.1 Q607.0,300.3 605.5,298.7 Q605.6,296.5 605.1,295.9 Q606.5,292.3 609.3,294.4 Q613.7,293.3 613.3,295.9 Z" fill="none" stroke="#6e6e6e" stroke-width="0.85" stroke-linejoin="round" stroke-linecap="round" />
<path d="M579.9,427.7 Q577.5,428.1 579.7,431.6 Q577.1,434.9 575.9,436.3 Q570.7,435.5 570.9,433.3 Q566.7,427.5 571.0,424.8 Q570.5,418.6 575.5,421.4 Q577.0,425.9 579.1,425.3 Z" fill="none" stroke="#6e6e6e" stroke-width="0.85" stroke-linejoin="round" stroke-linecap="round" />
<circle cx="630.3" cy="316.3" r="5.2" fill="none" stroke="#8a8a8a" stroke-width="0.8" />
<circle cx="689.4" cy="352.8" r="3.3" fill="none" stroke="#999999" stroke-width="0.8" />
<path d="M542.3,392.6 Q545.0,393.0 541.8,395.3 Q543.9,396.4 538.2,397.5 Q534.5,397.0 532.1,394.4 Q531.2,389.6 531.7,390.4 Q536.5,388.7 536.7,388.5 Q536.3,387.6 540.7,390.3 Z" fill="none" stroke="#8a8a8a" stroke-width="0.85" stroke-linejoin="round" stroke-linecap="round" />
<path d="M604.9,371.5 Q605.1,371.2 608.9,358.9" fill="none" stroke="#999999" stroke-width="0.85" stroke-linejoin="round" stroke-linecap="round" />
<path d="M648.7,406.7 Q649.9,405.1 647.5,409.2 Q644.9,413.2 643.6,411.9 Q641.4,410.5 639.7,409.3 Q635.9,408.6 639.8,404.7 Q640.3,404.1 644.0,403.3 Q646.5,404.5 647.8,405.2 Z" fill="none" stroke="#6e6e6e" stroke-width="0.85" stroke-linejoin="round" stroke-linecap="round" />
<path d="M645.9,431.2 Q640.9,433.1 655.2,439.7" fill="none" stroke="#999999" stroke-width="0.85" stroke-linejoin="round" stroke-linecap="round" />
<path d="M605.3,270.7 Q607.9,271.8 604.2,274.1 Q602.2,280.2 600.3,276.8 Q598.8,274.9 595.6,272.8 Q595.8,270.8 594.5,265.6 Q594.0,260.2 599.0,261.1 Q599.7,260.7 604.0,265.6 Z" fill="none" stroke="#999999" stroke-width="0.85" stroke-linejoin="round" stroke-linecap="round" />
<path d="M577.1,296.0 L585.0,291.4 A1.5,1.5 0 0 1 586.5,294.1 L578.6,298.7 A1.5,1.5 0 0 1 577.1,296.0 Z" fill="none" stroke="#8a8a8a" stroke-width="0.8" stroke-linejoin="round" stroke-linecap="round" />
<path d="M589.7,294.2 Q591.4,292.6 588.4,297.6 Q586.8,300.3 584.1,300.9 Q582.5,303.3 579.6,296.0 Q578.1,291.8 580.0,289.7 Q581.0,286.5 584.6,287.7 Q590.0,284.9 588.5,290.7 Z" fill="none" stroke="#999999" stroke-width="0.85" stroke-linejoin="round" stroke-linecap="round" />
<circle cx="589.6" cy="410.7" r="2.3" fill="none" stroke="#7c7c7c" stroke-width="0.8" />
<circle cx="589.6" cy="410.7" r="1.3" fill="none" stroke="#7c7c7c" stroke-width="0.75" />
<path d="M552.2,416.6 Q545.5,419.7 546.5,404.6" fill="none" stroke="#7c7c7c" stroke-width="0.85" stroke-linejoin="round" stroke-linecap="round" />
<path d="M657.8,421.2 Q651.1,421.0 644.9,422.4" fill="none" stroke="#7c7c7c" stroke-width="0.85" stroke-linejoin="round" stroke-linecap="round" />
<path d="M655.1,430.1 Q657.5,429.0 653.8,432.2 Q650.5,435.8 646.2,433.8 Q637.9,435.9 636.1,432.0 Q629.9,429.5 635.8,428.3 Q638.2,428.8 646.3,426.4 Q652.7,424.9 654.1,428.6 Z" fill="none" stroke="#8a8a8a" stroke-width="0.85" stroke-linejoin="round" stroke-linecap="round" />
<path d="M567.0,358.2 Q568.1,358.0 565.2,359.5 Q561.8,363.0 561.9,360.6 Q558.4,358.4 558.8,359.5 Q555.9,358.4 558.4,356.7 Q561.2,353.8 561.6,355.0 Q562.2,356.0 565.4,356.7 Z" fill="none" stroke="#7c7c7c" stroke-width="0.85" stroke-linejoin="round" stroke-linecap="round" />
<path d="M578.6,341.5 L582.7,348.6 A1.3,1.3 0 0 1 580.4,349.9 L576.3,342.8 A1.3,1.3 0 0 1 578.6,341.5 Z" fill="none" stroke="#7c7c7c" stroke-width="0.8" stroke-linejoin="round" stroke-linecap="round" />
<circle cx="634.7" cy="384.4" r="4.7" fill="none" stroke="#7c7c7c" stroke-width="0.8" />
<circle cx="634.7" cy="384.4" r="2.6" fill="none" stroke="#7c7c7c" stroke-width="0.75" />
<circle cx="537.7" cy="389.2" r="2.0" fill="none" stroke="#8a8a8a" stroke-width="0.8" />
<circle cx="537.7" cy="389.2" r="1.1" fill="none" stroke="#8a8a8a" stroke-width="0.75" />
<circle cx="551.1" cy="370.6" r="5.5" fill="none" stroke="#7c7c7c" stroke-width="0.8" />
<circle cx="551.1" cy="370.6" r="3.0" fill="none" stroke="#7c7c7c" stroke-width="0.75" />
<path d="M562.7,395.1 Q560.7,395.0 558.1,396.2 Q551.9,396.2 547.1,397.8 Q538.6,396.2 541.4,396.6 Q543.9,393.8 544.4,392.7 Q543.9,389.0 550.3,391.0 Q555.0,389.9 558.3,393.2 Z" fill="none" stroke="#6e6e6e" stroke-width="0.85" stroke-linejoin="round" stroke-linecap="round" />
<path d="M552.9,410.4 Q550.1,411.7 564.5,421.7" fill="none" stroke="#6e6e6e" stroke-width="0.85" stroke-linejoin="round" stroke-linecap="round" />
<path d="M589.1,342.2 Q590.8,345.0 587.6,343.6 Q585.8,345.7 581.3,346.4 Q578.6,347.6 574.1,344.0 Q569.8,343.0 573.9,338.6 Q578.9,334.1 581.2,336.9 Q587.8,336.2 587.7,339.5 Z" fill="none" stroke="#999999" stroke-width="0.85" stroke-linejoin="round" stroke-linecap="round" />
<circle cx="531.7" cy="270.2" r="5.4" fill="none" stroke="#8a8a8a" stroke-width="0.8" />
<circle cx="531.7" cy="270.2" r="2.9" fill="none" stroke="#8a8a8a" stroke-width="0.75" />
<path d="M622.1,427.7 Q621.6,427.9 620.9,429.4 Q619.5,430.0 615.6,431.3 Q614.1,429.9 609.3,430.0 Q609.7,430.5 609.3,426.8 Q613.7,423.3 616.0,425.2 Q620.5,427.9 621.3,426.4 Z" fill="none" stroke="#7c7c7c" stroke-width="0.85" stroke-linejoin="round" stroke-linecap="round" />
<path d="M592.6,272.2 Q592.0,272.2 590.8,274.7 Q591.1,277.5 585.7,277.0 Q579.6,275.8 578.8,274.9 Q576.2,270.2 578.4,269.6 Q579.2,263.6 585.7,266.7 Q590.4,264.2 591.4,269.6 Z" fill="none" stroke="#8a8a8a" stroke-width="0.85" stroke-linejoin="round" stroke-linecap="round" />
<path d="M593.3,248.7 Q591.6,250.7 591.0,250.4 Q590.5,254.9 582.5,251.7 Q578.9,252.6 575.2,249.7 Q575.8,249.3 576.6,245.9 Q581.0,245.6 583.0,244.3 Q584.9,246.6 590.1,246.7 Z" fill="none" stroke="#999999" stroke-width="0.85" stroke-linejoin="round" stroke-linecap="round" />
<path d="M588.2,286.3 Q587.8,288.6 577.6,270.0" fill="none" stroke="#7c7c7c" stroke-width="0.85" stroke-linejoin="round" stroke-linecap="round" />
<path d="M739.7,269.6 L747.4,284.2 A1.5,1.5 0 0 1 744.7,285.6 L737.0,271.0 A1.5,1.5 0 0 1 739.7,269.6 Z" fill="none" stroke="#6e6e6e" stroke-width="0.8" stroke-linejoin="round" stroke-linecap="round" />
<path d="M657.3,391.4 L670.6,384.4 A1.7,1.7 0 0 1 672.2,387.4 L658.9,394.4 A1.7,1.7 0 0 1 657.3,391.4 Z" fill="none" stroke="#8a8a8a" stroke-width="0.8" stroke-linejoin="round" stroke-linecap="round" />
<path d="M620.2,316.6 Q619.1,315.2 618.1,319.7 Q614.0,323.6 612.7,322.7 Q610.6,325.3 607.0,318.9 Q603.6,317.8 605.9,311.2 Q609.7,305.8 611.9,308.0 Q619.3,309.6 618.4,312.7 Z" fill="none" stroke="#7c7c7c" stroke-width="0.85" stroke-linejoin="round" stroke-linecap="round" />
<path d="M598.3,293.5 Q600.4,295.7 597.6,295.1 Q597.1,294.9 594.7,297.0 Q595.1,299.1 591.6,295.4 Q593.1,291.0 591.7,292.0 Q592.4,290.4 595.2,290.7 Q597.1,291.7 597.9,292.2 Z" fill="none" stroke="#999999" stroke-width="0.85" stroke-linejoin="round" stroke-linecap="round" />
<path d="M646.3,424.7 Q646.0,424.3 642.4,427.0 Q636.2,429.2 632.9,429.7 Q629.9,432.5 623.0,427.6 Q616.3,422.4 621.8,422.3 Q623.3,420.8 632.3,419.7 Q639.5,417.6 643.1,422.2 Z" fill="none" stroke="#999999" stroke-width="0.85" stroke-linejoin="round" stroke-linecap="round" />
<path d="M625.6,352.1 Q624.1,353.5 624.2,353.6 Q625.6,357.3 617.0,355.4 Q613.8,356.5 608.6,353.7 Q605.0,348.8 608.4,349.3 Q612.8,348.2 615.6,347.6 Q620.9,349.8 623.0,350.3 Z" fill="none" stroke="#999999" stroke-width="0.85" stroke-linejoin="round" stroke-linecap="round" />
<circle cx="715.7" cy="275.9" r="4.4" fill="none" stroke="#7c7c7c" stroke-width="0.8" />
<circle cx="715.7" cy="275.9" r="2.4" fill="none" stroke="#7c7c7c" stroke-width="0.75" />
<path d="M608.3,325.0 Q605.8,323.4 607.4,326.1 Q604.8,327.9 602.8,327.2 Q599.7,330.2 597.6,325.7 Q595.7,322.6 597.5,322.8 Q597.7,321.9 602.9,321.4 Q604.3,322.0 607.6,323.3 Z" fill="none" stroke="#6e6e6e" stroke-width="0.85" stroke-linejoin="round" stroke-linecap="round" />
<path d="M683.6,349.5 L683.9,359.7 A1.5,1.5 0 0 1 680.9,359.8 L680.6,349.6 A1.5,1.5 0 0 1 683.6,349.5 Z" fill="none" stroke="#999999" stroke-width="0.8" stroke-linejoin="round" stroke-linecap="round" />
<path d="M658.0,281.7 L658.6,296.7 A1.3,1.3 0 0 1 655.9,296.8 L655.4,281.8 A1.3,1.3 0 0 1 658.0,281.7 Z" fill="none" stroke="#8a8a8a" stroke-width="0.8" stroke-linejoin="round" stroke-linecap="round" />
<path d="M655.3,401.3 Q655.3,398.4 654.4,404.6 Q655.2,407.0 651.4,408.8 Q651.8,408.5 648.3,405.2 Q650.1,402.6 647.7,396.9 Q647.7,392.8 650.9,392.3 Q656.5,394.5 654.6,396.5 Z" fill="none" stroke="#999999" stroke-width="0.85" stroke-linejoin="round" stroke-linecap="round" />
<circle cx="672.1" cy="257.4" r="3.8" fill="none" stroke="#999999" stroke-width="0.8" />
<path d="M648.1,426.8 L651.4,432.9 A1.8,1.8 0 0 1 648.2,434.6 L645.0,428.5 A1.8,1.8 0 0 1 648.1,426.8 Z" fill="none" stroke="#7c7c7c" stroke-width="0.8" stroke-linejoin="round" stroke-linecap="round" />
<circle cx="568.6" cy="377.7" r="3.8" fill="none" stroke="#7c7c7c" stroke-width="0.8" />
<circle cx="568.6" cy="377.7" r="2.1" fill="none" stroke="#7c7c7c" stroke-width="0.75" />
<path d="M617.1,394.6 Q616.0,396.5 615.6,395.3 Q616.5,398.1 611.9,396.1 Q610.9,393.4 607.3,395.1 Q607.3,395.7 606.5,392.9 Q606.8,391.8 611.0,391.7 Q613.0,391.9 615.5,393.1 Z" fill="none" stroke="#8a8a8a" stroke-width="0.85" stroke-linejoin="round" stroke-linecap="round" />
<path d="M568.5,273.6 Q571.2,270.8 566.7,277.2 Q563.8,281.3 560.8,279.5 Q558.3,278.3 553.8,276.2 Q551.1,273.4 553.6,270.6 Q557.9,266.5 560.4,267.6 Q567.1,268.8 566.6,270.9 Z" fill="none" stroke="#8a8a8a" stroke-width="0.85" stroke-linejoin="round" stroke-linecap="round" />
<circle cx="644.6" cy="246.7" r="2.0" fill="none" stroke="#6e6e6e" stroke-width="0.8" />
<circle cx="569.7" cy="242.1" r="2.7" fill="none" stroke="#7c7c7c" stroke-width="0.8" />
<circle cx="569.7" cy="242.1" r="1.5" fill="none" stroke="#7c7c7c" stroke-width="0.75" />
<path d="M578.7,241.2 L586.7,236.6 A1.4,1.4 0 0 1 588.1,239.0 L580.1,243.7 A1.4,1.4 0 0 1 578.7,241.2 Z" fill="none" stroke="#8a8a8a" stroke-width="0.8" stroke-linejoin="round" stroke-linecap="round" />
<path d="M562.7,345.9 Q561.3,344.2 546.4,345.9" fill="none" stroke="#999999" stroke-width="0.85" stroke-linejoin="round" stroke-linecap="round" />
<path d="M640.3,330.6 Q640.3,328.9 638.8,332.4 Q637.9,335.2 634.0,334.4 Q632.7,332.7 628.8,332.3 Q624.7,330.2 628.7,328.5 Q629.5,326.6 633.5,327.5 Q636.8,325.3 638.4,329.3 Z" fill="none" stroke="#8a8a8a" stroke-width="0.85" stroke-linejoin="round" stroke-linecap="round" />
<path d="M585.1,308.6 Q583.3,310.9 590.0,315.2" fill="none" stroke="#7c7c7c" stroke-width="0.85" stroke-linejoin="round" stroke-linecap="round" />
<path d="M742.1,324.2 Q740.4,321.6 738.3,325.7 Q736.1,326.2 730.8,327.6 Q729.8,328.2 724.7,326.2 Q719.9,325.3 725.4,323.1 Q727.1,323.6 731.9,320.9 Q736.5,321.7 738.6,322.2 Z" fill="none" stroke="#7c7c7c" stroke-width="0.85" stroke-linejoin="round" stroke-linecap="round" />
<path d="M545.5,245.6 Q544.4,247.9 542.2,249.1 Q539.8,252.0 532.0,252.1 Q526.1,251.0 524.4,247.9 Q524.6,241.4 526.0,242.6 Q528.9,239.7 534.1,239.5 Q538.2,235.4 542.7,241.7 Z" fill="none" stroke="#8a8a8a" stroke-width="0.85" stroke-linejoin="round" stroke-linecap="round" />
<path d="M576.6,375.6 L577.3,393.4 A2.2,2.2 0 0 1 572.9,393.5 L572.3,375.8 A2.2,2.2 0 0 1 576.6,375.6 Z" fill="none" stroke="#7c7c7c" stroke-width="0.8" stroke-linejoin="round" stroke-linecap="round" />
<path d="M592.0,239.4 L595.5,246.0 A1.3,1.3 0 0 1 593.2,247.2 L589.7,240.6 A1.3,1.3 0 0 1 592.0,239.4 Z" fill="none" stroke="#999999" stroke-width="0.8" stroke-linejoin="round" stroke-linecap="round" />
<circle cx="603.5" cy="303.3" r="2.6" fill="none" stroke="#8a8a8a" stroke-width="0.8" />
<circle cx="603.5" cy="303.3" r="1.4" fill="none" stroke="#8a8a8a" stroke-width="0.75" />
<path d="M674.7,364.1 Q672.6,362.0 672.9,367.1 Q668.2,367.3 667.9,371.7 Q667.1,372.6 663.3,369.2 Q659.3,362.4 663.7,361.6 Q667.6,358.6 667.9,357.6 Q672.8,354.5 672.5,360.7 Z" fill="none" stroke="#999999" stroke-width="0.85" stroke-linejoin="round" stroke-linecap="round" />
<circle cx="563.0" cy="260.2" r="2.1" fill="none" stroke="#8a8a8a" stroke-width="0.8" />
<circle cx="605.1" cy="385.9" r="3.6" fill="none" stroke="#7c7c7c" stroke-width="0.8" />
<circle cx="605.1" cy="385.9" r="2.0" fill="none" stroke="#7c7c7c" stroke-width="0.75" />
<path d="M658.4,276.3 L658.8,287.4 A1.5,1.5 0 0 1 655.7,287.5 L655.3,276.4 A1.5,1.5 0 0 1 658.4,276.3 Z" fill="none" stroke="#7c7c7c" stroke-width="0.8" stroke-linejoin="round" stroke-linecap="round" />
<circle cx="584.3" cy="369.6" r="5.2" fill="none" stroke="#6e6e6e" stroke-width="0.8" />
<circle cx="584.3" cy="369.6" r="2.9" fill="none" stroke="#6e6e6e" stroke-width="0.75" />
<path d="M586.8,286.4 Q581.8,284.7 601.4,278.9" fill="none" stroke="#7c7c7c" stroke-width="0.85" stroke-linejoin="round" stroke-linecap="round" />
<path d="M601.5,357.9 Q604.0,365.2 612.1,341.0" fill="none" stroke="#6e6e6e" stroke-width="0.85" stroke-linejoin="round" stroke-linecap="round" />
<path d="M656.4,263.1 Q655.7,263.7 653.4,265.9 Q651.8,266.4 646.1,269.7 Q643.0,271.4 641.4,267.8 Q641.8,264.9 642.0,261.6 Q643.0,255.3 646.6,258.7 Q649.8,261.8 653.3,261.2 Z" fill="none" stroke="#7c7c7c" stroke-width="0.85" stroke-linejoin="round" stroke-linecap="round" />
<path d="M711.0,272.8 Q708.3,272.3 709.4,275.7 Q705.8,279.8 700.9,278.5 Q694.5,279.6 690.5,276.4 Q689.8,271.5 692.1,271.5 Q694.8,266.2 701.2,269.2 Q705.0,271.5 708.1,271.2 Z" fill="none" stroke="#999999" stroke-width="0.85" stroke-linejoin="round" stroke-linecap="round" />
<path d="M673.9,346.5 Q676.2,346.1 691.9,353.3" fill="none" stroke="#6e6e6e" stroke-width="0.85" stroke-linejoin="round" stroke-linecap="round" />
<path d="M711.9,269.7 L711.9,283.0 A2.2,2.2 0 0 1 707.5,283.0 L707.5,269.7 A2.2,2.2 0 0 1 711.9,269.7 Z" fill="none" stroke="#7c7c7c" stroke-width="0.8" stroke-linejoin="round" stroke-linecap="round" />
<path d="M603.9,366.6 L610.2,377.6 A2.1,2.1 0 0 1 606.6,379.7 L600.2,368.8 A2.1,2.1 0 0 1 603.9,366.6 Z" fill="none" stroke="#999999" stroke-width="0.8" stroke-linejoin="round" stroke-linecap="round" />
<path d="M590.1,392.1 Q590.8,391.6 588.2,393.8 Q584.8,398.3 584.2,396.1 Q583.3,399.2 580.7,394.1 Q580.4,393.7 579.7,388.7 Q577.5,383.5 583.5,386.8 Q588.2,388.1 588.6,390.0 Z" fill="none" stroke="#999999" stroke-width="0.85" stroke-linejoin="round" stroke-linecap="round" />
<circle cx="619.9" cy="350.6" r="4.6" fill="none" stroke="#8a8a8a" stroke-width="0.8" />
<circle cx="619.9" cy="350.6" r="2.5" fill="none" stroke="#8a8a8a" stroke-width="0.75" />
<path d="M586.4,310.8 Q581.1,305.1 603.1,311.2" fill="none" stroke="#8a8a8a" stroke-width="0.85" stroke-linejoin="round" stroke-linecap="round" />
<path d="M556.5,260.4 Q553.9,255.4 564.9,272.7" fill="none" stroke="#7c7c7c" stroke-width="0.85" stroke-linejoin="round" stroke-linecap="round" />
<circle cx="740.7" cy="293.7" r="3.4" fill="none" stroke="#8a8a8a" stroke-width="0.8" />
<circle cx="740.7" cy="293.7" r="1.9" fill="none" stroke="#8a8a8a" stroke-width="0.75" />
<path d="M644.4,431.2 L652.8,445.8 A2.1,2.1 0 0 1 649.2,447.8 L640.8,433.3 A2.1,2.1 0 0 1 644.4,431.2 Z" fill="none" stroke="#999999" stroke-width="0.8" stroke-linejoin="round" stroke-linecap="round" />
<path d="M733.4,273.5 Q733.7,276.2 731.7,276.0 Q732.2,276.9 724.8,277.5 Q719.9,275.4 715.3,274.7 Q709.0,274.3 716.4,271.7 Q723.3,269.5 725.6,270.5 Q729.0,271.6 731.5,272.0 Z" fill="none" stroke="#6e6e6e" stroke-width="0.85" stroke-linejoin="round" stroke-linecap="round" />
<circle cx="546.6" cy="256.9" r="3.6" fill="none" stroke="#999999" stroke-width="0.8" />
<circle cx="602.0" cy="311.0" r="2.3" fill="none" stroke="#8a8a8a" stroke-width="0.8" />
<path d="M661.4,359.1 Q659.9,358.0 660.1,362.4 Q656.4,367.5 655.2,365.4 Q654.1,363.9 648.8,361.7 Q645.3,356.0 648.4,355.1 Q648.6,352.8 654.4,352.4 Q660.5,350.3 659.8,355.9 Z" fill="none" stroke="#999999" stroke-width="0.85" stroke-linejoin="round" stroke-linecap="round" />
<circle cx="577.3" cy="388.3" r="3.1" fill="none" stroke="#7c7c7c" stroke-width="0.8" />
<circle cx="577.3" cy="388.3" r="1.7" fill="none" stroke="#7c7c7c" stroke-width="0.75" />
<path d="M572.0,294.9 Q571.0,295.0 570.0,297.9 Q567.6,299.5 565.7,300.9 Q561.2,301.6 560.7,298.8 Q559.6,297.8 560.4,294.0 Q560.5,290.3 565.6,290.8 Q569.3,288.5 570.3,292.7 Z" fill="none" stroke="#6e6e6e" stroke-width="0.85" stroke-linejoin="round" stroke-linecap="round" />
<path d="M560.2,360.1 L566.3,371.6 A2.2,2.2 0 0 1 562.4,373.6 L556.3,362.2 A2.2,2.2 0 0 1 560.2,360.1 Z" fill="none" stroke="#6e6e6e" stroke-width="0.8" stroke-linejoin="round" stroke-linecap="round" />
<path d="M699.4,365.9 Q702.2,364.8 697.6,367.8 Q695.4,369.5 690.4,369.5 Q685.4,367.9 682.2,367.3 Q681.1,364.3 682.6,364.4 Q687.9,365.3 689.5,363.2 Q690.0,363.2 696.2,364.4 Z" fill="none" stroke="#6e6e6e" stroke-width="0.85" stroke-linejoin="round" stroke-linecap="round" />
<path d="M697.8,354.8 Q698.5,354.7 697.5,357.5 Q698.1,359.8 693.3,360.7 Q690.6,363.5 687.8,358.0 Q686.2,355.3 687.4,351.1 Q689.6,346.5 692.3,347.7 Q695.4,350.5 696.8,351.5 Z" fill="none" stroke="#999999" stroke-width="0.85" stroke-linejoin="round" stroke-linecap="round" />
<path d="M545.2,239.7 Q543.2,239.9 544.5,241.9 Q544.1,246.6 541.2,244.1 Q538.9,246.6 537.2,241.3 Q536.7,236.8 537.1,236.0 Q537.6,231.1 541.2,234.3 Q542.2,232.7 544.6,237.4 Z" fill="none" stroke="#6e6e6e" stroke-width="0.85" stroke-linejoin="round" stroke-linecap="round" />
<path d="M674.5,360.5 L680.9,357.0 A1.7,1.7 0 0 1 682.5,360.0 L676.1,363.4 A1.7,1.7 0 0 1 674.5,360.5 Z" fill="none" stroke="#8a8a8a" stroke-width="0.8" stroke-linejoin="round" stroke-linecap="round" />
<path d="M696.6,274.8 Q696.8,272.4 695.2,276.6 Q696.0,277.4 692.1,278.4 Q692.8,276.7 687.8,277.2 Q685.0,278.4 688.1,273.6 Q688.4,271.8 692.7,270.9 Q693.4,268.1 695.6,272.7 Z" fill="none" stroke="#7c7c7c" stroke-width="0.85" stroke-linejoin="round" stroke-linecap="round" />
<circle cx="613.5" cy="398.3" r="2.9" fill="none" stroke="#6e6e6e" stroke-width="0.8" />
<circle cx="613.5" cy="398.3" r="1.6" fill="none" stroke="#6e6e6e" stroke-width="0.75" />
<path d="M618.3,425.0 Q617.4,425.0 617.3,426.2 Q615.5,425.9 614.5,428.0 Q610.1,427.4 611.4,426.6 Q608.7,422.2 611.1,422.9 Q609.5,421.1 614.1,420.6 Q613.0,422.2 617.1,422.5 Z" fill="none" stroke="#999999" stroke-width="0.85" stroke-linejoin="round" stroke-linecap="round" />
<path d="M609.0,326.6 Q611.4,328.7 607.2,328.2 Q605.5,332.7 601.8,330.1 Q600.7,332.5 595.6,327.6 Q594.9,325.0 595.9,323.3 Q599.1,324.3 601.9,320.8 Q605.7,317.4 607.1,323.1 Z" fill="none" stroke="#7c7c7c" stroke-width="0.85" stroke-linejoin="round" stroke-linecap="round" />
<path d="M721.9,291.4 Q727.0,290.3 715.7,284.5" fill="none" stroke="#999999" stroke-width="0.85" stroke-linejoin="round" stroke-linecap="round" />
<path d="M593.9,415.0 L594.5,432.6 A2.0,2.0 0 0 1 590.5,432.7 L589.9,415.2 A2.0,2.0 0 0 1 593.9,415.0 Z" fill="none" stroke="#6e6e6e" stroke-width="0.8" stroke-linejoin="round" stroke-linecap="round" />
<path d="M684.6,250.0 Q682.0,243.7 676.2,251.1" fill="none" stroke="#7c7c7c" stroke-width="0.85" stroke-linejoin="round" stroke-linecap="round" />
<circle cx="581.5" cy="371.1" r="3.2" fill="none" stroke="#6e6e6e" stroke-width="0.8" />
<circle cx="581.5" cy="371.1" r="1.8" fill="none" stroke="#6e6e6e" stroke-width="0.75" />
<path d="M638.1,264.4 L655.2,262.9 A1.5,1.5 0 0 1 655.4,265.8 L638.3,267.3 A1.5,1.5 0 0 1 638.1,264.4 Z" fill="none" stroke="#7c7c7c" stroke-width="0.8" stroke-linejoin="round" stroke-linecap="round" />
<path d="M582.2,329.3 Q581.8,327.9 580.6,332.0 Q581.6,335.3 573.3,334.2 Q565.2,332.7 567.7,331.2 Q570.4,330.4 569.3,327.5 Q573.4,326.9 575.8,325.7 Q582.1,326.6 581.6,327.2 Z" fill="none" stroke="#6e6e6e" stroke-width="0.85" stroke-linejoin="round" stroke-linecap="round" />
<path d="M747.9,273.8 Q750.2,276.8 743.3,277.2 Q738.3,281.7 734.0,281.1 Q730.4,282.7 724.8,276.3 Q719.4,271.9 724.3,269.3 Q725.8,270.0 734.5,266.6 Q742.0,267.3 744.3,269.7 Z" fill="none" stroke="#7c7c7c" stroke-width="0.85" stroke-linejoin="round" stroke-linecap="round" />
<path d="M630.2,280.4 Q628.3,277.9 629.2,284.0 Q629.0,286.7 624.4,286.8 Q623.6,288.2 619.3,283.1 Q618.2,277.5 619.6,274.9 Q621.2,269.5 623.6,270.5 Q623.2,273.9 628.0,275.9 Z" fill="none" stroke="#7c7c7c" stroke-width="0.85" stroke-linejoin="round" stroke-linecap="round" />
<path d="M712.8,329.1 Q709.8,328.1 711.2,332.6 Q708.7,339.0 703.6,335.4 Q696.9,333.4 695.0,331.5 Q693.7,325.9 697.1,325.8 Q700.5,322.6 706.6,323.9 Q709.3,325.1 712.2,326.8 Z" fill="none" stroke="#8a8a8a" stroke-width="0.85" stroke-linejoin="round" stroke-linecap="round" />
<path d="M615.2,396.8 L621.2,408.2 A1.5,1.5 0 0 1 618.6,409.6 L612.6,398.2 A1.5,1.5 0 0 1 615.2,396.8 Z" fill="none" stroke="#8a8a8a" stroke-width="0.8" stroke-linejoin="round" stroke-linecap="round" />
<path d="M733.3,295.5 Q735.3,295.7 729.3,298.4 Q725.9,303.3 719.6,301.2 Q711.7,300.7 713.6,298.7 Q712.9,295.7 714.9,294.1 Q715.7,294.6 720.6,292.0 Q721.8,291.8 728.9,293.8 Z" fill="none" stroke="#6e6e6e" stroke-width="0.85" stroke-linejoin="round" stroke-linecap="round" />
<circle cx="705.0" cy="383.5" r="2.6" fill="none" stroke="#7c7c7c" stroke-width="0.8" />
<circle cx="705.0" cy="383.5" r="1.4" fill="none" stroke="#7c7c7c" stroke-width="0.75" />
<path d="M736.2,288.1 Q736.2,287.8 733.4,291.1 Q729.1,294.9 726.3,294.5 Q719.0,294.7 721.3,291.1 Q723.5,286.3 722.0,283.5 Q721.5,279.1 728.5,280.0 Q734.8,282.4 734.9,284.2 Z" fill="none" stroke="#7c7c7c" stroke-width="0.85" stroke-linejoin="round" stroke-linecap="round" />
<path d="M557.1,339.3 Q556.1,338.7 556.3,342.1 Q558.4,343.5 550.6,344.1 Q543.3,340.5 541.6,341.2 Q539.6,336.9 540.6,337.5 Q544.1,335.5 549.4,336.0 Q555.4,338.2 556.1,337.6 Z" fill="none" stroke="#6e6e6e" stroke-width="0.85" stroke-linejoin="round" stroke-linecap="round" />
<path d="M592.0,276.1 Q592.3,273.4 591.2,278.2 Q589.7,282.8 588.3,281.2 Q583.5,280.7 585.7,278.4 Q582.6,277.1 585.5,271.7 Q584.7,266.1 589.0,268.7 Q591.5,267.1 592.2,272.5 Z" fill="none" stroke="#999999" stroke-width="0.85" stroke-linejoin="round" stroke-linecap="round" />
<path d="M622.7,359.4 Q620.5,359.4 621.5,361.8 Q623.1,361.9 617.6,364.4 Q617.0,363.0 613.3,362.1 Q614.6,359.5 613.0,357.8 Q613.5,358.3 617.3,355.9 Q620.4,353.1 621.4,357.6 Z" fill="none" stroke="#7c7c7c" stroke-width="0.85" stroke-linejoin="round" stroke-linecap="round" />
<path d="M584.0,250.4 Q584.6,250.9 581.3,252.9 Q578.2,254.8 572.3,255.4 Q566.1,256.2 564.5,253.3 Q560.9,253.5 564.7,249.4 Q567.4,249.9 574.7,246.7 Q581.1,245.9 583.5,248.2 Z" fill="none" stroke="#8a8a8a" stroke-width="0.85" stroke-linejoin="round" stroke-linecap="round" />
<path d="M598.8,277.2 Q598.8,275.1 596.9,282.9 Q595.4,285.9 590.4,287.7 Q585.5,284.3 585.2,281.7 Q584.2,278.5 586.7,274.3 Q590.1,274.2 592.8,270.3 Q596.6,268.2 597.8,272.8 Z" fill="none" stroke="#999999" stroke-width="0.85" stroke-linejoin="round" stroke-linecap="round" />
<path d="M540.6,394.7 Q541.3,397.4 539.4,397.8 Q538.6,401.2 533.8,400.1 Q526.6,398.4 527.0,397.2 Q522.2,396.6 525.5,391.3 Q524.1,384.9 533.4,387.4 Q538.4,385.5 540.5,391.0 Z" fill="none" stroke="#999999" stroke-width="0.85" stroke-linejoin="round" stroke-linecap="round" />
<path d="M604.1,404.6 Q602.9,406.2 601.7,406.1 Q597.7,409.8 597.4,408.0 Q596.7,410.7 593.6,407.0 Q590.6,408.3 593.4,403.8 Q595.8,400.5 597.7,402.1 Q601.0,401.2 602.1,403.4 Z" fill="none" stroke="#999999" stroke-width="0.85" stroke-linejoin="round" stroke-linecap="round" />
<path d="M551.1,246.2 Q551.8,243.8 549.2,247.5 Q548.0,247.5 545.4,248.4 Q546.4,247.5 541.9,246.9 Q538.4,247.8 541.5,244.0 Q543.6,240.9 544.8,242.5 Q544.8,240.5 549.1,244.4 Z" fill="none" stroke="#8a8a8a" stroke-width="0.85" stroke-linejoin="round" stroke-linecap="round" />
<path d="M701.2,296.4 Q702.0,292.2 686.1,290.7" fill="none" stroke="#7c7c7c" stroke-width="0.85" stroke-linejoin="round" stroke-linecap="round" />
<path d="M594.6,352.2 Q594.5,350.1 592.3,356.7 Q590.1,361.3 586.6,361.0 Q583.4,359.5 580.3,357.0 Q574.9,355.6 579.6,348.1 Q580.7,341.8 586.7,343.4 Q592.9,341.9 593.0,347.9 Z" fill="none" stroke="#999999" stroke-width="0.85" stroke-linejoin="round" stroke-linecap="round" />
<path d="M596.3,389.0 Q596.2,391.1 594.3,390.3 Q593.4,390.8 589.6,391.6 Q588.9,390.3 584.2,390.5 Q583.7,389.7 584.4,387.7 Q584.5,385.9 590.9,385.5 Q596.0,386.4 595.4,387.0 Z" fill="none" stroke="#8a8a8a" stroke-width="0.85" stroke-linejoin="round" stroke-linecap="round" />
<path d="M608.1,360.8 L623.2,353.7 A2.1,2.1 0 0 1 625.0,357.5 L609.9,364.5 A2.1,2.1 0 0 1 608.1,360.8 Z" fill="none" stroke="#7c7c7c" stroke-width="0.8" stroke-linejoin="round" stroke-linecap="round" />
<circle cx="560.9" cy="350.2" r="2.1" fill="none" stroke="#6e6e6e" stroke-width="0.8" />
<path d="M734.7,326.4 Q733.7,326.5 732.0,330.6 Q730.0,337.3 722.3,334.4 Q713.6,333.1 713.8,331.3 Q712.4,328.1 715.9,324.8 Q717.6,319.5 726.2,320.6 Q732.1,322.3 733.8,323.2 Z" fill="none" stroke="#999999" stroke-width="0.85" stroke-linejoin="round" stroke-linecap="round" />
<path d="M630.2,364.5 Q630.7,364.6 629.5,368.5 Q629.1,372.8 625.3,372.7 Q624.5,374.4 619.8,369.2 Q615.3,368.3 619.2,360.4 Q617.8,352.8 624.1,356.3 Q629.5,355.7 628.9,360.7 Z" fill="none" stroke="#8a8a8a" stroke-width="0.85" stroke-linejoin="round" stroke-linecap="round" />
<circle cx="631.4" cy="405.1" r="3.0" fill="none" stroke="#8a8a8a" stroke-width="0.8" />
<path d="M615.4,332.3 Q612.9,330.8 614.1,335.6 Q610.8,338.9 608.4,340.3 Q605.2,340.1 602.5,336.8 Q602.0,332.4 601.9,327.5 Q604.4,326.1 607.4,323.5 Q610.9,326.7 613.6,328.0 Z" fill="none" stroke="#8a8a8a" stroke-width="0.85" stroke-linejoin="round" stroke-linecap="round" />
<circle cx="622.4" cy="338.9" r="4.5" fill="none" stroke="#7c7c7c" stroke-width="0.8" />
<circle cx="712.4" cy="259.7" r="2.5" fill="none" stroke="#7c7c7c" stroke-width="0.8" />
<circle cx="712.4" cy="259.7" r="1.4" fill="none" stroke="#7c7c7c" stroke-width="0.75" />
<path d="M553.1,372.5 Q556.4,377.9 540.2,369.4" fill="none" stroke="#8a8a8a" stroke-width="0.85" stroke-linejoin="round" stroke-linecap="round" />
<path d="M708.4,286.7 Q707.8,288.4 704.8,287.9 Q700.2,288.6 695.9,290.1 Q688.0,293.1 687.7,288.9 Q686.9,285.1 688.5,286.0 Q691.4,286.9 697.6,285.0 Q701.7,286.9 705.6,285.8 Z" fill="none" stroke="#7c7c7c" stroke-width="0.85" stroke-linejoin="round" stroke-linecap="round" />
<path d="M623.1,353.5 Q622.0,356.4 614.1,347.2" fill="none" stroke="#7c7c7c" stroke-width="0.85" stroke-linejoin="round" stroke-linecap="round" />
<path d="M623.2,393.8 Q622.0,395.2 620.8,395.7 Q620.0,397.5 615.2,398.4 Q610.0,399.6 610.1,395.8 Q608.1,391.9 610.3,389.1 Q609.4,386.1 615.5,386.4 Q620.5,386.6 621.0,390.3 Z" fill="none" stroke="#7c7c7c" stroke-width="0.85" stroke-linejoin="round" stroke-linecap="round" />
<circle cx="561.7" cy="341.4" r="2.9" fill="none" stroke="#8a8a8a" stroke-width="0.8" />
<path d="M640.3,320.7 Q640.5,321.4 637.2,325.2 Q633.7,328.2 630.3,328.8 Q625.3,329.0 625.8,324.2 Q627.4,319.4 625.7,317.1 Q625.1,313.5 630.4,313.3 Q634.1,313.6 637.4,316.8 Z" fill="none" stroke="#999999" stroke-width="0.85" stroke-linejoin="round" stroke-linecap="round" />
<path d="M696.8,390.3 Q699.2,393.1 694.8,392.7 Q694.6,393.7 689.5,395.0 Q683.2,397.2 685.4,392.6 Q682.1,389.0 685.3,387.8 Q688.4,386.5 689.9,386.0 Q695.9,388.6 695.4,388.5 Z" fill="none" stroke="#999999" stroke-width="0.85" stroke-linejoin="round" stroke-linecap="round" />
<circle cx="560.1" cy="337.9" r="2.6" fill="none" stroke="#999999" stroke-width="0.8" />
<circle cx="560.1" cy="337.9" r="1.4" fill="none" stroke="#999999" stroke-width="0.75" />
<path d="M686.3,369.4 Q687.6,370.8 696.7,373.4" fill="none" stroke="#999999" stroke-width="0.85" stroke-linejoin="round" stroke-linecap="round" />
<circle cx="647.9" cy="410.9" r="4.6" fill="none" stroke="#6e6e6e" stroke-width="0.8" />
<circle cx="647.9" cy="410.9" r="2.5" fill="none" stroke="#6e6e6e" stroke-width="0.75" />
<path d="M723.5,311.4 Q720.6,311.5 720.8,313.2 Q719.6,314.4 715.1,314.8 Q714.5,315.3 710.1,312.8 Q709.1,309.7 710.2,309.4 Q714.7,307.0 715.0,307.9 Q719.7,306.4 720.6,309.6 Z" fill="none" stroke="#6e6e6e" stroke-width="0.85" stroke-linejoin="round" stroke-linecap="round" />
<circle cx="560.1" cy="382.9" r="3.2" fill="none" stroke="#999999" stroke-width="0.8" />
<circle cx="560.1" cy="382.9" r="1.7" fill="none" stroke="#999999" stroke-width="0.75" />
<circle cx="588.1" cy="286.1" r="2.9" fill="none" stroke="#7c7c7c" stroke-width="0.8" />
<path d="M579.3,273.0 Q584.8,279.6 574.2,255.1" fill="none" stroke="#8a8a8a" stroke-width="0.85" stroke-linejoin="round" stroke-linecap="round" />
<path d="M733.2,319.6 Q731.1,320.0 731.9,322.7 Q732.2,324.3 729.1,324.6 Q727.7,325.5 726.9,321.4 Q725.2,318.3 726.1,316.5 Q723.3,315.0 728.7,313.5 Q732.3,315.9 732.3,316.5 Z" fill="none" stroke="#7c7c7c" stroke-width="0.85" stroke-linejoin="round" stroke-linecap="round" />
<path d="M712.9,363.1 Q714.0,361.0 711.8,366.4 Q710.3,369.8 705.8,369.9 Q702.0,368.9 697.5,366.2 Q692.9,363.6 697.3,359.1 Q697.7,353.9 705.2,356.5 Q712.7,358.3 711.4,360.2 Z" fill="none" stroke="#7c7c7c" stroke-width="0.85" stroke-linejoin="round" stroke-linecap="round" />
<path d="M650.4,412.6 Q652.0,412.5 647.2,415.9 Q642.6,420.8 639.1,418.0 Q634.4,415.6 631.0,413.6 Q627.1,407.4 631.5,407.8 Q632.6,402.4 638.9,405.0 Q645.4,407.1 646.5,408.7 Z" fill="none" stroke="#999999" stroke-width="0.85" stroke-linejoin="round" stroke-linecap="round" />
<path d="M649.0,424.6 Q651.8,427.4 647.2,428.0 Q647.0,430.3 641.1,431.7 Q636.8,432.1 636.0,428.2 Q636.7,423.6 637.0,420.3 Q640.3,415.9 643.3,416.9 Q649.0,415.5 648.4,421.1 Z" fill="none" stroke="#7c7c7c" stroke-width="0.85" stroke-linejoin="round" stroke-linecap="round" />
<path d="M558.6,255.6 Q559.5,253.6 557.4,258.0 Q558.8,258.4 554.0,259.8 Q552.0,259.0 550.2,257.3 Q546.3,253.9 550.2,252.6 Q550.2,247.9 554.4,248.6 Q554.0,248.1 557.7,251.4 Z" fill="none" stroke="#999999" stroke-width="0.85" stroke-linejoin="round" stroke-linecap="round" />
<path d="M744.6,322.5 Q745.4,319.9 741.3,323.9 Q737.2,326.8 733.0,326.3 Q725.7,324.5 727.5,324.4 Q726.5,323.8 729.1,319.6 Q731.9,315.9 735.6,317.2 Q737.5,318.9 742.3,319.7 Z" fill="none" stroke="#7c7c7c" stroke-width="0.85" stroke-linejoin="round" stroke-linecap="round" />
<circle cx="566.5" cy="386.7" r="5.3" fill="none" stroke="#8a8a8a" stroke-width="0.8" />
<path d="M610.1,284.1 Q610.9,285.8 608.1,285.8 Q606.6,290.2 603.8,288.5 Q600.2,291.8 600.3,285.2 Q601.4,280.0 600.3,277.0 Q598.7,273.7 604.0,274.2 Q607.3,278.1 608.3,279.7 Z" fill="none" stroke="#8a8a8a" stroke-width="0.85" stroke-linejoin="round" stroke-linecap="round" />
<path d="M659.8,383.0 Q660.7,385.7 655.1,386.5 Q647.6,389.8 646.1,388.1 Q644.0,387.1 636.3,383.0 Q630.0,379.4 634.9,376.5 Q637.3,374.0 644.9,373.2 Q651.6,373.5 655.4,378.1 Z" fill="none" stroke="#8a8a8a" stroke-width="0.85" stroke-linejoin="round" stroke-linecap="round" />
<circle cx="618.7" cy="255.2" r="3.9" fill="none" stroke="#8a8a8a" stroke-width="0.8" />
<circle cx="618.7" cy="255.2" r="2.2" fill="none" stroke="#8a8a8a" stroke-width="0.75" />
<path d="M627.9,434.2 Q631.8,429.5 627.1,449.5" fill="none" stroke="#8a8a8a" stroke-width="0.85" stroke-linejoin="round" stroke-linecap="round" />
<path d="M664.8,383.3 Q662.1,380.9 661.9,385.1 Q661.2,385.8 654.3,388.0 Q646.8,391.9 645.3,386.5 Q640.1,385.7 645.2,381.5 Q649.3,381.7 653.7,379.3 Q655.3,379.5 661.3,381.5 Z" fill="none" stroke="#6e6e6e" stroke-width="0.85" stroke-linejoin="round" stroke-linecap="round" />
<path d="M665.6,242.8 Q667.7,246.6 658.9,236.7" fill="none" stroke="#6e6e6e" stroke-width="0.85" stroke-linejoin="round" stroke-linecap="round" />
<path d="M630.2,271.6 Q627.9,269.2 628.6,275.1 Q629.4,277.0 625.1,277.9 Q623.8,277.6 621.7,275.0 Q619.6,271.9 620.7,268.2 Q619.1,264.7 623.9,263.4 Q625.7,263.8 628.4,267.4 Z" fill="none" stroke="#6e6e6e" stroke-width="0.85" stroke-linejoin="round" stroke-linecap="round" />
<path d="M615.3,307.9 Q607.5,308.1 605.2,310.5" fill="none" stroke="#999999" stroke-width="0.85" stroke-linejoin="round" stroke-linecap="round" />
<path d="M545.6,264.9 Q546.4,263.0 542.8,268.6 Q540.6,272.2 536.4,272.2 Q535.4,270.5 531.5,268.2 Q530.8,264.7 531.2,261.5 Q529.3,256.9 536.8,258.0 Q542.0,257.6 543.5,261.1 Z" fill="none" stroke="#8a8a8a" stroke-width="0.85" stroke-linejoin="round" stroke-linecap="round" />
<path d="M704.1,372.5 Q703.2,371.3 703.8,374.4 Q700.9,374.8 698.8,377.1 Q691.2,377.6 692.7,375.0 Q691.1,370.6 693.0,370.3 Q697.3,370.7 697.5,368.7 Q700.3,370.8 702.2,370.7 Z" fill="none" stroke="#6e6e6e" stroke-width="0.85" stroke-linejoin="round" stroke-linecap="round" />
<path d="M605.6,387.6 Q602.6,387.5 603.7,388.7 Q604.0,391.7 599.9,390.2 Q600.4,390.3 596.8,388.7 Q595.0,386.9 596.7,385.6 Q596.0,381.9 599.7,384.1 Q602.3,382.1 603.7,385.7 Z" fill="none" stroke="#6e6e6e" stroke-width="0.85" stroke-linejoin="round" stroke-linecap="round" />
<path d="M602.4,336.2 L602.8,349.6 A1.7,1.7 0 0 1 599.3,349.8 L598.9,336.3 A1.7,1.7 0 0 1 602.4,336.2 Z" fill="none" stroke="#8a8a8a" stroke-width="0.8" stroke-linejoin="round" stroke-linecap="round" />
<path d="M729.5,315.3 L741.6,309.7 A1.8,1.8 0 0 1 743.1,312.8 L731.0,318.5 A1.8,1.8 0 0 1 729.5,315.3 Z" fill="none" stroke="#999999" stroke-width="0.8" stroke-linejoin="round" stroke-linecap="round" />
<path d="M634.0,433.9 Q633.6,441.0 640.6,424.9" fill="none" stroke="#999999" stroke-width="0.85" stroke-linejoin="round" stroke-linecap="round" />
<path d="M665.3,393.4 Q662.9,394.1 663.2,395.9 Q662.6,401.3 655.0,398.4 Q650.1,397.1 646.7,394.9 Q642.3,389.5 645.5,388.4 Q644.9,385.8 653.5,385.4 Q659.7,383.2 663.0,389.3 Z" fill="none" stroke="#8a8a8a" stroke-width="0.85" stroke-linejoin="round" stroke-linecap="round" />
<path d="M547.7,373.5 Q549.4,376.1 545.4,374.7 Q545.3,376.2 538.1,376.1 Q536.0,373.6 529.6,375.0 Q524.5,372.3 528.6,372.1 Q531.3,371.2 538.1,370.8 Q542.5,369.9 546.3,372.2 Z" fill="none" stroke="#7c7c7c" stroke-width="0.85" stroke-linejoin="round" stroke-linecap="round" />
<circle cx="651.7" cy="239.7" r="3.7" fill="none" stroke="#8a8a8a" stroke-width="0.8" />
<path d="M562.4,386.9 Q561.4,380.3 575.0,401.7" fill="none" stroke="#8a8a8a" stroke-width="0.85" stroke-linejoin="round" stroke-linecap="round" />
<path d="M653.1,282.5 Q655.5,282.7 652.3,284.6 Q651.1,288.9 646.9,287.5 Q641.8,289.7 638.4,284.6 Q634.4,279.4 638.4,279.9 Q644.2,276.2 646.0,278.9 Q646.7,278.0 651.3,280.7 Z" fill="none" stroke="#6e6e6e" stroke-width="0.85" stroke-linejoin="round" stroke-linecap="round" />
<path d="M635.8,364.3 Q634.4,362.4 633.4,366.8 Q633.0,370.4 628.1,369.5 Q627.6,367.5 623.4,367.6 Q619.7,364.3 622.6,362.4 Q623.7,361.5 627.2,359.6 Q632.7,361.9 633.3,362.0 Z" fill="none" stroke="#8a8a8a" stroke-width="0.85" stroke-linejoin="round" stroke-linecap="round" />
<path d="M523.9,243.4 L523.9,253.3 A1.6,1.6 0 0 1 520.7,253.3 L520.7,243.4 A1.6,1.6 0 0 1 523.9,243.4 Z" fill="none" stroke="#999999" stroke-width="0.8" stroke-linejoin="round" stroke-linecap="round" />
<circle cx="548.8" cy="411.0" r="2.0" fill="none" stroke="#6e6e6e" stroke-width="0.8" />
<path d="M595.5,297.5 L602.0,294.5 A2.0,2.0 0 0 1 603.7,298.1 L597.2,301.1 A2.0,2.0 0 0 1 595.5,297.5 Z" fill="none" stroke="#8a8a8a" stroke-width="0.8" stroke-linejoin="round" stroke-linecap="round" />
<circle cx="663.0" cy="283.0" r="3.6" fill="none" stroke="#7c7c7c" stroke-width="0.8" />
<circle cx="657.8" cy="245.5" r="4.2" fill="none" stroke="#6e6e6e" stroke-width="0.8" />
<circle cx="657.8" cy="245.5" r="2.3" fill="none" stroke="#6e6e6e" stroke-width="0.75" />
<path d="M740.1,298.2 Q740.0,295.6 738.0,300.8 Q734.5,304.9 732.0,302.7 Q726.8,299.7 726.5,299.7 Q724.6,297.8 726.4,295.3 Q725.6,292.6 732.4,292.4 Q737.3,292.9 738.5,294.8 Z" fill="none" stroke="#999999" stroke-width="0.85" stroke-linejoin="round" stroke-linecap="round" />
<path d="M611.6,434.3 L618.9,448.0 A1.8,1.8 0 0 1 615.7,449.7 L608.4,436.0 A1.8,1.8 0 0 1 611.6,434.3 Z" fill="none" stroke="#7c7c7c" stroke-width="0.8" stroke-linejoin="round" stroke-linecap="round" />
<path d="M559.0,399.4 Q565.5,399.3 552.2,387.3" fill="none" stroke="#8a8a8a" stroke-width="0.85" stroke-linejoin="round" stroke-linecap="round" />
<path d="M628.5,422.4 Q630.3,420.2 625.3,424.7 Q621.6,426.3 619.9,426.9 Q619.4,425.7 616.0,425.4 Q611.8,423.9 614.9,421.0 Q613.4,415.5 620.2,417.8 Q625.8,418.7 626.7,420.0 Z" fill="none" stroke="#6e6e6e" stroke-width="0.85" stroke-linejoin="round" stroke-linecap="round" />
<circle cx="651.4" cy="351.6" r="4.5" fill="none" stroke="#6e6e6e" stroke-width="0.8" />
<path d="M630.1,258.8 Q622.8,254.1 637.1,253.0" fill="none" stroke="#6e6e6e" stroke-width="0.85" stroke-linejoin="round" stroke-linecap="round" />
<circle cx="600.1" cy="253.2" r="3.4" fill="none" stroke="#8a8a8a" stroke-width="0.8" />
<circle cx="600.1" cy="253.2" r="1.9" fill="none" stroke="#8a8a8a" stroke-width="0.75" />
<circle cx="595.6" cy="396.5" r="3.3" fill="none" stroke="#8a8a8a" stroke-width="0.8" />
<path d="M594.7,323.6 L602.9,319.2 A2.0,2.0 0 0 1 604.7,322.6 L596.5,327.0 A2.0,2.0 0 0 1 594.7,323.6 Z" fill="none" stroke="#7c7c7c" stroke-width="0.8" stroke-linejoin="round" stroke-linecap="round" />
<path d="M597.3,382.4 L605.2,378.7 A1.8,1.8 0 0 1 606.8,382.0 L598.8,385.7 A1.8,1.8 0 0 1 597.3,382.4 Z" fill="none" stroke="#7c7c7c" stroke-width="0.8" stroke-linejoin="round" stroke-linecap="round" />
<circle cx="714.7" cy="291.8" r="5.4" fill="none" stroke="#8a8a8a" stroke-width="0.8" />
<circle cx="714.7" cy="291.8" r="3.0" fill="none" stroke="#8a8a8a" stroke-width="0.75" />
<path d="M634.7,296.0 Q632.2,296.1 633.0,297.8 Q629.3,297.6 624.7,299.7 Q619.8,300.5 617.1,298.2 Q617.1,299.3 619.3,294.9 Q620.4,295.3 626.0,292.9 Q627.8,291.8 632.1,294.3 Z" fill="none" stroke="#6e6e6e" stroke-width="0.85" stroke-linejoin="round" stroke-linecap="round" />
<path d="M684.1,245.4 Q687.1,246.0 682.8,248.0 Q679.6,250.0 677.4,251.6 Q675.0,249.9 670.5,248.0 Q669.3,245.1 670.2,240.9 Q674.9,238.4 677.9,238.8 Q680.2,240.4 683.5,242.2 Z" fill="none" stroke="#6e6e6e" stroke-width="0.85" stroke-linejoin="round" stroke-linecap="round" />
<circle cx="526.9" cy="239.4" r="3.8" fill="none" stroke="#8a8a8a" stroke-width="0.8" />
<circle cx="526.9" cy="239.4" r="2.1" fill="none" stroke="#8a8a8a" stroke-width="0.75" />
<path d="M585.4,386.3 Q585.9,383.4 583.4,390.6 Q581.0,397.3 573.4,394.4 Q566.9,393.6 563.5,388.9 Q564.1,385.7 565.9,381.0 Q568.7,379.1 576.6,377.0 Q585.1,373.1 584.1,381.2 Z" fill="none" stroke="#999999" stroke-width="0.85" stroke-linejoin="round" stroke-linecap="round" />
<path d="M736.1,322.6 Q736.3,322.5 735.3,326.3 Q736.3,331.9 731.8,330.3 Q730.2,328.1 727.0,326.6 Q727.7,321.6 726.5,319.6 Q731.0,319.3 730.3,317.8 Q734.0,317.5 734.3,320.8 Z" fill="none" stroke="#7c7c7c" stroke-width="0.85" stroke-linejoin="round" stroke-linecap="round" />
<path d="M561.8,400.0 L561.8,417.9 A1.9,1.9 0 0 1 558.1,417.9 L558.1,400.0 A1.9,1.9 0 0 1 561.8,400.0 Z" fill="none" stroke="#8a8a8a" stroke-width="0.8" stroke-linejoin="round" stroke-linecap="round" />
<circle cx="556.0" cy="417.8" r="2.2" fill="none" stroke="#7c7c7c" stroke-width="0.8" />
<path d="M654.7,417.8 Q654.6,419.7 652.1,423.1 Q648.5,428.1 645.0,427.3 Q638.0,423.4 638.3,422.5 Q634.0,417.8 636.8,415.1 Q637.4,409.0 644.0,411.9 Q651.2,410.1 652.6,415.1 Z" fill="none" stroke="#999999" stroke-width="0.85" stroke-linejoin="round" stroke-linecap="round" />
<path d="M579.7,375.4 Q578.3,378.1 577.4,378.9 Q574.4,384.6 569.5,382.8 Q566.8,384.4 561.8,380.0 Q558.8,378.3 562.6,373.1 Q565.6,372.1 569.3,370.5 Q573.0,372.4 576.3,373.5 Z" fill="none" stroke="#999999" stroke-width="0.85" stroke-linejoin="round" stroke-linecap="round" />
<circle cx="674.1" cy="362.7" r="3.4" fill="none" stroke="#8a8a8a" stroke-width="0.8" />
<path d="M694.2,278.9 L707.0,278.9 A1.5,1.5 0 0 1 707.0,281.9 L694.2,281.9 A1.5,1.5 0 0 1 694.2,278.9 Z" fill="none" stroke="#6e6e6e" stroke-width="0.8" stroke-linejoin="round" stroke-linecap="round" />
<circle cx="586.1" cy="414.1" r="3.7" fill="none" stroke="#8a8a8a" stroke-width="0.8" />
<circle cx="586.1" cy="414.1" r="2.0" fill="none" stroke="#8a8a8a" stroke-width="0.75" />
<path d="M603.7,254.6 L604.3,269.8 A2.2,2.2 0 0 1 599.8,270.0 L599.3,254.8 A2.2,2.2 0 0 1 603.7,254.6 Z" fill="none" stroke="#999999" stroke-width="0.8" stroke-linejoin="round" stroke-linecap="round" />
<circle cx="639.9" cy="270.8" r="4.9" fill="none" stroke="#999999" stroke-width="0.8" />
<circle cx="633.4" cy="287.7" r="3.6" fill="none" stroke="#8a8a8a" stroke-width="0.8" />
<circle cx="633.4" cy="287.7" r="2.0" fill="none" stroke="#8a8a8a" stroke-width="0.75" />
<path d="M695.2,360.8 Q695.0,362.3 693.1,362.1 Q688.1,363.6 686.7,364.3 Q683.2,366.1 680.9,362.7 Q680.3,363.1 680.9,357.7 Q681.5,354.7 686.7,354.4 Q692.2,350.8 693.1,357.2 Z" fill="none" stroke="#7c7c7c" stroke-width="0.85" stroke-linejoin="round" stroke-linecap="round" />
<circle cx="593.8" cy="299.9" r="4.0" fill="none" stroke="#6e6e6e" stroke-width="0.8" />
<circle cx="593.8" cy="299.9" r="2.2" fill="none" stroke="#6e6e6e" stroke-width="0.75" />
<path d="M571.0,416.3 Q570.5,413.9 567.5,418.3 Q564.3,422.0 560.5,420.1 Q554.9,419.7 555.5,418.3 Q555.5,415.9 555.7,415.0 Q554.8,413.6 561.3,412.8 Q563.1,411.5 568.0,414.2 Z" fill="none" stroke="#6e6e6e" stroke-width="0.85" stroke-linejoin="round" stroke-linecap="round" />
<circle cx="696.3" cy="255.2" r="5.1" fill="none" stroke="#7c7c7c" stroke-width="0.8" />
<circle cx="696.3" cy="255.2" r="2.8" fill="none" stroke="#7c7c7c" stroke-width="0.75" />
<circle cx="726.0" cy="282.3" r="3.1" fill="none" stroke="#999999" stroke-width="0.8" />
<circle cx="726.0" cy="282.3" r="1.7" fill="none" stroke="#999999" stroke-width="0.75" />
<path d="M666.8,345.0 Q666.8,344.8 663.5,348.1 Q663.0,349.1 656.6,350.2 Q651.6,350.0 650.7,347.3 Q647.4,344.5 650.9,341.9 Q651.3,340.9 657.7,338.8 Q661.5,339.6 664.3,342.1 Z" fill="none" stroke="#8a8a8a" stroke-width="0.85" stroke-linejoin="round" stroke-linecap="round" />
<circle cx="575.2" cy="423.3" r="2.0" fill="none" stroke="#7c7c7c" stroke-width="0.8" />
<circle cx="575.2" cy="423.3" r="1.1" fill="none" stroke="#7c7c7c" stroke-width="0.75" />
<path d="M581.0,402.8 Q583.5,400.6 578.9,404.9 Q574.6,404.6 570.7,407.9 Q565.4,411.5 564.5,406.1 Q563.8,405.4 566.8,401.2 Q571.6,397.0 572.5,398.9 Q576.7,399.4 578.4,400.8 Z" fill="none" stroke="#7c7c7c" stroke-width="0.85" stroke-linejoin="round" stroke-linecap="round" />
<path d="M592.8,353.9 Q595.2,352.3 588.8,355.6 Q586.4,354.4 578.7,357.2 Q572.7,356.0 570.5,355.7 Q568.3,353.5 572.3,353.0 Q576.7,351.4 582.7,351.3 Q590.5,351.8 590.9,352.4 Z" fill="none" stroke="#6e6e6e" stroke-width="0.85" stroke-linejoin="round" stroke-linecap="round" />
<circle cx="582.5" cy="277.3" r="5.2" fill="none" stroke="#6e6e6e" stroke-width="0.8" />
<circle cx="582.5" cy="277.3" r="2.8" fill="none" stroke="#6e6e6e" stroke-width="0.75" />
<path d="M607.8,387.3 Q601.9,386.8 594.6,391.0" fill="none" stroke="#7c7c7c" stroke-width="0.85" stroke-linejoin="round" stroke-linecap="round" />
<path d="M656.3,249.5 L656.3,259.8 A1.4,1.4 0 0 1 653.5,259.8 L653.5,249.5 A1.4,1.4 0 0 1 656.3,249.5 Z" fill="none" stroke="#7c7c7c" stroke-width="0.8" stroke-linejoin="round" stroke-linecap="round" />
<path d="M581.0,351.1 Q581.6,348.1 578.0,354.1 Q577.0,355.1 571.1,358.0 Q568.5,361.2 565.6,354.7 Q562.4,349.5 565.5,346.8 Q568.3,341.4 571.1,344.6 Q576.8,346.4 578.1,348.7 Z" fill="none" stroke="#6e6e6e" stroke-width="0.85" stroke-linejoin="round" stroke-linecap="round" />
<path d="M692.2,385.1 Q690.7,387.4 689.5,388.4 Q687.1,392.0 683.3,391.5 Q679.3,393.9 676.1,388.5 Q672.9,385.9 674.3,382.5 Q675.2,379.1 682.7,379.3 Q687.9,378.9 690.7,382.2 Z" fill="none" stroke="#6e6e6e" stroke-width="0.85" stroke-linejoin="round" stroke-linecap="round" />
<path d="M579.3,253.2 L579.8,268.8 A1.3,1.3 0 0 1 577.2,268.9 L576.6,253.3 A1.3,1.3 0 0 1 579.3,253.2 Z" fill="none" stroke="#7c7c7c" stroke-width="0.8" stroke-linejoin="round" stroke-linecap="round" />
<path d="M723.7,300.8 L732.0,296.3 A1.6,1.6 0 0 1 733.5,299.1 L725.1,303.5 A1.6,1.6 0 0 1 723.7,300.8 Z" fill="none" stroke="#6e6e6e" stroke-width="0.8" stroke-linejoin="round" stroke-linecap="round" />
<path d="M645.6,292.6 Q646.2,292.7 641.9,294.6 Q639.2,295.2 632.1,296.7 Q625.2,293.9 625.1,294.7 Q625.5,294.5 627.4,290.3 Q632.1,290.8 635.7,287.9 Q642.3,285.5 643.2,290.2 Z" fill="none" stroke="#8a8a8a" stroke-width="0.85" stroke-linejoin="round" stroke-linecap="round" />
<circle cx="592.3" cy="420.5" r="3.9" fill="none" stroke="#8a8a8a" stroke-width="0.8" />
<path d="M725.5,280.4 Q723.9,281.8 724.3,282.2 Q721.0,283.3 719.7,283.1 Q718.9,281.7 714.4,281.1 Q710.5,280.9 714.0,278.6 Q714.4,279.0 719.1,277.9 Q722.1,280.4 724.2,279.4 Z" fill="none" stroke="#6e6e6e" stroke-width="0.85" stroke-linejoin="round" stroke-linecap="round" />
<path d="M714.9,272.6 Q712.7,274.9 712.1,274.5 Q708.6,276.7 705.6,277.0 Q703.4,278.0 699.8,275.3 Q699.4,274.7 699.0,271.5 Q700.3,272.3 704.8,270.2 Q711.2,269.9 712.1,271.5 Z" fill="none" stroke="#999999" stroke-width="0.85" stroke-linejoin="round" stroke-linecap="round" />
<path d="M585.0,412.5 Q586.1,413.9 584.2,415.4 Q586.3,416.8 580.8,418.7 Q579.8,418.1 577.3,416.1 Q576.5,411.8 577.3,410.7 Q577.6,410.9 579.6,408.6 Q579.5,408.3 583.0,410.7 Z" fill="none" stroke="#999999" stroke-width="0.85" stroke-linejoin="round" stroke-linecap="round" />
<path d="M730.2,327.9 Q731.4,327.9 729.7,330.1 Q727.3,329.4 724.2,332.2 Q718.2,331.2 718.4,330.0 Q714.6,327.2 719.4,325.2 Q721.8,325.2 724.1,323.1 Q724.6,325.0 728.6,325.7 Z" fill="none" stroke="#6e6e6e" stroke-width="0.85" stroke-linejoin="round" stroke-linecap="round" />
<path d="M605.2,354.1 Q607.7,354.9 602.9,357.5 Q603.6,360.9 595.4,360.0 Q587.8,359.9 587.5,356.1 Q586.2,351.5 585.1,348.8 Q583.9,341.7 592.7,344.5 Q599.9,346.6 602.7,349.3 Z" fill="none" stroke="#6e6e6e" stroke-width="0.85" stroke-linejoin="round" stroke-linecap="round" />
<path d="M604.7,247.0 L605.3,263.4 A2.0,2.0 0 0 1 601.2,263.6 L600.6,247.1 A2.0,2.0 0 0 1 604.7,247.0 Z" fill="none" stroke="#999999" stroke-width="0.8" stroke-linejoin="round" stroke-linecap="round" />
<path d="M573.4,400.8 L579.7,412.7 A1.4,1.4 0 0 1 577.3,414.0 L571.0,402.1 A1.4,1.4 0 0 1 573.4,400.8 Z" fill="none" stroke="#6e6e6e" stroke-width="0.8" stroke-linejoin="round" stroke-linecap="round" />
<path d="M583.8,336.5 Q581.6,335.3 582.4,339.4 Q579.7,342.1 579.2,341.4 Q580.0,341.9 576.1,338.8 Q574.4,340.0 575.3,334.8 Q574.2,330.7 577.9,332.4 Q581.0,333.9 582.0,334.4 Z" fill="none" stroke="#7c7c7c" stroke-width="0.85" stroke-linejoin="round" stroke-linecap="round" />
<path d="M700.2,344.9 Q705.6,346.4 688.9,354.4" fill="none" stroke="#999999" stroke-width="0.85" stroke-linejoin="round" stroke-linecap="round" />
<path d="M634.3,308.2 Q634.9,314.4 640.5,324.0" fill="none" stroke="#8a8a8a" stroke-width="0.85" stroke-linejoin="round" stroke-linecap="round" />
<circle cx="586.9" cy="316.2" r="3.2" fill="none" stroke="#6e6e6e" stroke-width="0.8" />
<circle cx="586.9" cy="316.2" r="1.7" fill="none" stroke="#6e6e6e" stroke-width="0.75" />
<path d="M535.5,264.2 Q533.3,263.9 525.2,267.5" fill="none" stroke="#6e6e6e" stroke-width="0.85" stroke-linejoin="round" stroke-linecap="round" />
<path d="M559.9,385.4 Q562.9,383.3 545.6,383.4" fill="none" stroke="#8a8a8a" stroke-width="0.85" stroke-linejoin="round" stroke-linecap="round" />
<circle cx="703.8" cy="371.6" r="3.4" fill="none" stroke="#7c7c7c" stroke-width="0.8" />
<circle cx="703.8" cy="371.6" r="1.9" fill="none" stroke="#7c7c7c" stroke-width="0.75" />
<path d="M605.5,263.7 Q605.6,256.7 617.9,252.8" fill="none" stroke="#6e6e6e" stroke-width="0.85" stroke-linejoin="round" stroke-linecap="round" />
<circle cx="528.6" cy="254.9" r="2.9" fill="none" stroke="#8a8a8a" stroke-width="0.8" />
</g>
<circle cx="610.0" cy="318.6" r="2.8" fill="#fff" stroke="#333" stroke-width="1.1" />
<circle cx="610.0" cy="318.6" r="1.3" fill="none" stroke="#444" stroke-width="0.7" />
<circle cx="622.6" cy="341.4" r="2.8" fill="#fff" stroke="#333" stroke-width="1.1" />
<circle cx="622.6" cy="341.4" r="1.3" fill="none" stroke="#444" stroke-width="0.7" />
<circle cx="637.0" cy="342.5" r="2.8" fill="#fff" stroke="#333" stroke-width="1.1" />
<circle cx="637.0" cy="342.5" r="1.3" fill="none" stroke="#444" stroke-width="0.7" />
<circle cx="651.3" cy="354.5" r="2.8" fill="#fff" stroke="#333" stroke-width="1.1" />
<circle cx="651.3" cy="354.5" r="1.3" fill="none" stroke="#444" stroke-width="0.7" />
<circle cx="627.7" cy="368.4" r="2.8" fill="#fff" stroke="#333" stroke-width="1.1" />
<circle cx="627.7" cy="368.4" r="1.3" fill="none" stroke="#444" stroke-width="0.7" />
<circle cx="628.7" cy="384.6" r="2.8" fill="#fff" stroke="#333" stroke-width="1.1" />
<circle cx="628.7" cy="384.6" r="1.3" fill="none" stroke="#444" stroke-width="0.7" />
<circle cx="624.6" cy="390.8" r="2.8" fill="#fff" stroke="#333" stroke-width="1.1" />
<circle cx="624.6" cy="390.8" r="1.3" fill="none" stroke="#444" stroke-width="0.7" />
<circle cx="620.5" cy="396.8" r="2.8" fill="#fff" stroke="#333" stroke-width="1.1" />
<circle cx="620.5" cy="396.8" r="1.3" fill="none" stroke="#444" stroke-width="0.7" />
<circle cx="633.0" cy="285.6" r="2.8" fill="#fff" stroke="#333" stroke-width="1.1" />
<circle cx="633.0" cy="285.6" r="1.3" fill="none" stroke="#444" stroke-width="0.7" />
<circle cx="642.0" cy="258.0" r="2.8" fill="#fff" stroke="#333" stroke-width="1.1" />
<circle cx="642.0" cy="258.0" r="1.3" fill="none" stroke="#444" stroke-width="0.7" />
<circle cx="654.4" cy="281.3" r="2.8" fill="#fff" stroke="#333" stroke-width="1.1" />
<circle cx="654.4" cy="281.3" r="1.3" fill="none" stroke="#444" stroke-width="0.7" />
<circle cx="584.6" cy="263.0" r="2.8" fill="#fff" stroke="#333" stroke-width="1.1" />
<circle cx="584.6" cy="263.0" r="1.3" fill="none" stroke="#444" stroke-width="0.7" />
<circle cx="564.0" cy="262.0" r="2.8" fill="#fff" stroke="#333" stroke-width="1.1" />
<circle cx="564.0" cy="262.0" r="1.3" fill="none" stroke="#444" stroke-width="0.7" />
<circle cx="716.0" cy="293.0" r="2.8" fill="#fff" stroke="#333" stroke-width="1.1" />
<circle cx="716.0" cy="293.0" r="1.3" fill="none" stroke="#444" stroke-width="0.7" />
<circle cx="596.0" cy="430.0" r="2.8" fill="#fff" stroke="#333" stroke-width="1.1" />
<circle cx="596.0" cy="430.0" r="1.3" fill="none" stroke="#444" stroke-width="0.7" />
<circle cx="660.0" cy="420.0" r="2.8" fill="#fff" stroke="#333" stroke-width="1.1" />
<circle cx="660.0" cy="420.0" r="1.3" fill="none" stroke="#444" stroke-width="0.7" />
<path d="M628,252 L648,250 C652,262 650,290 641,305 L630,330 L620,320 C626,302 628,282 628,252 Z" fill="#fff" stroke="#666" stroke-width="0.9" stroke-linejoin="round" stroke-linecap="round" />
<circle cx="641.0" cy="259.0" r="3.2" fill="none" stroke="#444" stroke-width="0.9" />
<circle cx="633.0" cy="286.0" r="3.2" fill="none" stroke="#333" stroke-width="1.0" />
<ellipse cx="601.0" cy="336.0" rx="12.0" ry="11.0" transform="rotate(0 601.0 336.0)" fill="#fff" stroke="#444" stroke-width="1.0" />
<ellipse cx="598.0" cy="337.0" rx="8.0" ry="8.5" transform="rotate(0 598.0 337.0)" fill="none" stroke="#777" stroke-width="0.8" />
<circle cx="652.0" cy="377.0" r="14.0" fill="#fff" stroke="#555" stroke-width="1.0" />
<circle cx="652.0" cy="377.0" r="6.0" fill="none" stroke="#666" stroke-width="0.9" />
<circle cx="652.0" cy="377.0" r="2.0" fill="none" stroke="#555" stroke-width="0.8" />
<polyline points="640.0,360.0 660.0,352.0 672.0,358.0" fill="none" stroke="#555" stroke-width="0.9" stroke-linejoin="round" stroke-linecap="round" />
<polyline points="523.0,262.0 532.0,248.0 548.0,243.0 562.0,242.0 575.0,240.0 600.0,241.0 615.0,239.0 640.0,240.0" fill="none" stroke="#666" stroke-width="0.9" stroke-linejoin="round" stroke-linecap="round" />
<polyline points="669.0,240.0 687.0,241.0 701.0,254.0 715.0,255.0 729.0,258.0 738.0,268.0 741.0,277.0" fill="none" stroke="#333" stroke-width="1.0" stroke-linejoin="round" stroke-linecap="round" />
<rect x="692" y="278" width="9" height="6" rx="3" transform="rotate(-20 692 278)" fill="none" stroke="#444" stroke-width="1"/>
<rect x="704" y="274" width="9" height="6" rx="3" transform="rotate(-20 704 274)" fill="none" stroke="#444" stroke-width="1"/>
<rect x="716" y="270" width="9" height="6" rx="3" transform="rotate(-20 716 270)" fill="none" stroke="#444" stroke-width="1"/>
<polyline points="634.0,254.0 646.0,254.0 645.0,300.0 640.0,322.0 628.0,330.0 624.0,305.0 630.0,275.0 634.0,254.0" fill="none" stroke="#666" stroke-width="0.9" stroke-linejoin="round" stroke-linecap="round" />
<polyline points="575.0,300.0 600.0,280.0 620.0,270.0 628.0,268.0" fill="none" stroke="#777" stroke-width="0.9" stroke-linejoin="round" stroke-linecap="round" />
<polyline points="577.0,305.0 602.0,286.0 622.0,276.0" fill="none" stroke="#777" stroke-width="0.9" stroke-linejoin="round" stroke-linecap="round" />
<polyline points="528.0,258.0 560.0,256.0 568.0,256.0" fill="none" stroke="#666" stroke-width="1.0" stroke-linejoin="round" stroke-linecap="round" />
<polyline points="530.0,264.0 566.0,262.0" fill="none" stroke="#666" stroke-width="1.0" stroke-linejoin="round" stroke-linecap="round" />
<polyline points="532.0,250.0 548.0,238.0" fill="none" stroke="#777" stroke-width="0.8" stroke-linejoin="round" stroke-linecap="round" />
<polyline points="537.0,252.0 556.0,238.0" fill="none" stroke="#777" stroke-width="0.8" stroke-linejoin="round" stroke-linecap="round" />
<circle cx="585.0" cy="365.0" r="12.0" fill="none" stroke="#777" stroke-width="0.9" />
<circle cx="585.0" cy="365.0" r="6.0" fill="none" stroke="#777" stroke-width="0.9" />
<circle cx="625.0" cy="365.0" r="10.0" fill="none" stroke="#777" stroke-width="0.9" />
<circle cx="621.0" cy="405.0" r="9.0" fill="none" stroke="#777" stroke-width="0.9" />
<polyline points="600.0,420.0 618.0,410.0 640.0,385.0 660.0,372.0" fill="none" stroke="#666" stroke-width="1.0" stroke-linejoin="round" stroke-linecap="round" />
<polyline points="606.0,428.0 624.0,416.0 646.0,392.0" fill="none" stroke="#666" stroke-width="1.0" stroke-linejoin="round" stroke-linecap="round" />
<polyline points="618.0,436.0 660.0,436.0 663.0,425.0 671.0,407.0 688.0,400.0 704.0,390.0 708.0,375.0 707.0,360.0" fill="none" stroke="#444" stroke-width="1.0" stroke-linejoin="round" stroke-linecap="round" />
<polyline points="705.0,360.0 735.0,355.0 740.0,340.0" fill="none" stroke="#555" stroke-width="0.9" stroke-linejoin="round" stroke-linecap="round" />
<path d="M707,360 C720,368 730,385 733,405 L735,415" fill="none" stroke="#333" stroke-width="1.3" stroke-linejoin="round" stroke-linecap="round" />
<path d="M708,357 C722,366 732,383 735,403 L737,413" fill="none" stroke="#333" stroke-width="0.7" stroke-linejoin="round" stroke-linecap="round" />
<polygon points="733.0,413.0 739.0,413.0 741.0,426.0 734.0,427.0" fill="#fff" stroke="#333" stroke-width="1.0" stroke-linejoin="round" />
<ellipse cx="543.5" cy="295.5" rx="16.0" ry="20.5" transform="rotate(-12 543.5 295.5)" fill="#fff" stroke="#444" stroke-width="5.5" stroke-dasharray="0.9 0.8"/>
<ellipse cx="543.5" cy="295.5" rx="16.0" ry="20.5" transform="rotate(-12 543.5 295.5)" fill="none" stroke="#333" stroke-width="1.0" />
<ellipse cx="536.5" cy="296.5" rx="15.0" ry="20.0" transform="rotate(-12 536.5 296.5)" fill="#fff" stroke="#333" stroke-width="1.1" />
<ellipse cx="536.5" cy="296.5" rx="12.0" ry="16.5" transform="rotate(-12 536.5 296.5)" fill="none" stroke="#777" stroke-width="0.7" />
<circle cx="534.5" cy="295.5" r="3.5" fill="none" stroke="#444" stroke-width="1" />
<circle cx="534.5" cy="295.5" r="1.5" fill="none" stroke="#444" stroke-width="0.7" />
<line x1="539.2" y1="297.2" x2="545.8" y2="301.0" stroke="#777" stroke-width="0.8" stroke-linecap="round" />
<line x1="534.3" y1="300.5" x2="534.1" y2="311.5" stroke="#777" stroke-width="0.8" stroke-linecap="round" />
<line x1="529.7" y1="296.9" x2="523.0" y2="299.9" stroke="#777" stroke-width="0.8" stroke-linecap="round" />
<line x1="531.7" y1="291.4" x2="527.8" y2="282.2" stroke="#777" stroke-width="0.8" stroke-linecap="round" />
<line x1="537.6" y1="291.6" x2="541.9" y2="282.9" stroke="#777" stroke-width="0.8" stroke-linecap="round" />
<path d="M650,290 C660,280 690,276 712,286 C728,296 738,312 735,330 C732,345 718,352 700,352 L668,354 C655,352 646,350 642,340 C636,325 640,300 650,290 Z" fill="none" stroke="#555" stroke-width="0.9" stroke-linejoin="round" stroke-linecap="round" />
<circle cx="712.0" cy="300.0" r="4.0" fill="none" stroke="#555" stroke-width="0.8" />
<circle cx="650.0" cy="345.0" r="5.0" fill="#fff" stroke="#444" stroke-width="0.9" />
<circle cx="677.0" cy="316.5" r="26.5" fill="#fff" stroke="#333" stroke-width="1.1" />
<line x1="700.0" y1="316.5" x2="704.0" y2="316.5" stroke="#333" stroke-width="0.7" stroke-linecap="round" />
<line x1="699.9" y1="318.9" x2="703.9" y2="319.3" stroke="#333" stroke-width="0.7" stroke-linecap="round" />
<line x1="699.5" y1="321.3" x2="703.4" y2="322.1" stroke="#333" stroke-width="0.7" stroke-linecap="round" />
<line x1="698.9" y1="323.6" x2="702.7" y2="324.8" stroke="#333" stroke-width="0.7" stroke-linecap="round" />
<line x1="698.0" y1="325.9" x2="701.7" y2="327.5" stroke="#333" stroke-width="0.7" stroke-linecap="round" />
<line x1="696.9" y1="328.0" x2="700.4" y2="330.0" stroke="#333" stroke-width="0.7" stroke-linecap="round" />
<line x1="695.6" y1="330.0" x2="698.8" y2="332.4" stroke="#333" stroke-width="0.7" stroke-linecap="round" />
<line x1="694.1" y1="331.9" x2="697.1" y2="334.6" stroke="#333" stroke-width="0.7" stroke-linecap="round" />
<line x1="692.4" y1="333.6" x2="695.1" y2="336.6" stroke="#333" stroke-width="0.7" stroke-linecap="round" />
<line x1="690.5" y1="335.1" x2="692.9" y2="338.3" stroke="#333" stroke-width="0.7" stroke-linecap="round" />
<line x1="688.5" y1="336.4" x2="690.5" y2="339.9" stroke="#333" stroke-width="0.7" stroke-linecap="round" />
<line x1="686.4" y1="337.5" x2="688.0" y2="341.2" stroke="#333" stroke-width="0.7" stroke-linecap="round" />
<line x1="684.1" y1="338.4" x2="685.3" y2="342.2" stroke="#333" stroke-width="0.7" stroke-linecap="round" />
<line x1="681.8" y1="339.0" x2="682.6" y2="342.9" stroke="#333" stroke-width="0.7" stroke-linecap="round" />
<line x1="679.4" y1="339.4" x2="679.8" y2="343.4" stroke="#333" stroke-width="0.7" stroke-linecap="round" />
<line x1="677.0" y1="339.5" x2="677.0" y2="343.5" stroke="#333" stroke-width="0.7" stroke-linecap="round" />
<line x1="674.6" y1="339.4" x2="674.2" y2="343.4" stroke="#333" stroke-width="0.7" stroke-linecap="round" />
<line x1="672.2" y1="339.0" x2="671.4" y2="342.9" stroke="#333" stroke-width="0.7" stroke-linecap="round" />
<line x1="669.9" y1="338.4" x2="668.7" y2="342.2" stroke="#333" stroke-width="0.7" stroke-linecap="round" />
<line x1="667.6" y1="337.5" x2="666.0" y2="341.2" stroke="#333" stroke-width="0.7" stroke-linecap="round" />
<line x1="665.5" y1="336.4" x2="663.5" y2="339.9" stroke="#333" stroke-width="0.7" stroke-linecap="round" />
<line x1="663.5" y1="335.1" x2="661.1" y2="338.3" stroke="#333" stroke-width="0.7" stroke-linecap="round" />
<line x1="661.6" y1="333.6" x2="658.9" y2="336.6" stroke="#333" stroke-width="0.7" stroke-linecap="round" />
<line x1="659.9" y1="331.9" x2="656.9" y2="334.6" stroke="#333" stroke-width="0.7" stroke-linecap="round" />
<line x1="658.4" y1="330.0" x2="655.2" y2="332.4" stroke="#333" stroke-width="0.7" stroke-linecap="round" />
<line x1="657.1" y1="328.0" x2="653.6" y2="330.0" stroke="#333" stroke-width="0.7" stroke-linecap="round" />
<line x1="656.0" y1="325.9" x2="652.3" y2="327.5" stroke="#333" stroke-width="0.7" stroke-linecap="round" />
<line x1="655.1" y1="323.6" x2="651.3" y2="324.8" stroke="#333" stroke-width="0.7" stroke-linecap="round" />
<line x1="654.5" y1="321.3" x2="650.6" y2="322.1" stroke="#333" stroke-width="0.7" stroke-linecap="round" />
<line x1="654.1" y1="318.9" x2="650.1" y2="319.3" stroke="#333" stroke-width="0.7" stroke-linecap="round" />
<line x1="654.0" y1="316.5" x2="650.0" y2="316.5" stroke="#333" stroke-width="0.7" stroke-linecap="round" />
<line x1="654.1" y1="314.1" x2="650.1" y2="313.7" stroke="#333" stroke-width="0.7" stroke-linecap="round" />
<line x1="654.5" y1="311.7" x2="650.6" y2="310.9" stroke="#333" stroke-width="0.7" stroke-linecap="round" />
<line x1="655.1" y1="309.4" x2="651.3" y2="308.2" stroke="#333" stroke-width="0.7" stroke-linecap="round" />
<line x1="656.0" y1="307.1" x2="652.3" y2="305.5" stroke="#333" stroke-width="0.7" stroke-linecap="round" />
<line x1="657.1" y1="305.0" x2="653.6" y2="303.0" stroke="#333" stroke-width="0.7" stroke-linecap="round" />
<line x1="658.4" y1="303.0" x2="655.2" y2="300.6" stroke="#333" stroke-width="0.7" stroke-linecap="round" />
<line x1="659.9" y1="301.1" x2="656.9" y2="298.4" stroke="#333" stroke-width="0.7" stroke-linecap="round" />
<line x1="661.6" y1="299.4" x2="658.9" y2="296.4" stroke="#333" stroke-width="0.7" stroke-linecap="round" />
<line x1="663.5" y1="297.9" x2="661.1" y2="294.7" stroke="#333" stroke-width="0.7" stroke-linecap="round" />
<line x1="665.5" y1="296.6" x2="663.5" y2="293.1" stroke="#333" stroke-width="0.7" stroke-linecap="round" />
<line x1="667.6" y1="295.5" x2="666.0" y2="291.8" stroke="#333" stroke-width="0.7" stroke-linecap="round" />
<line x1="669.9" y1="294.6" x2="668.7" y2="290.8" stroke="#333" stroke-width="0.7" stroke-linecap="round" />
<line x1="672.2" y1="294.0" x2="671.4" y2="290.1" stroke="#333" stroke-width="0.7" stroke-linecap="round" />
<line x1="674.6" y1="293.6" x2="674.2" y2="289.6" stroke="#333" stroke-width="0.7" stroke-linecap="round" />
<line x1="677.0" y1="293.5" x2="677.0" y2="289.5" stroke="#333" stroke-width="0.7" stroke-linecap="round" />
<line x1="679.4" y1="293.6" x2="679.8" y2="289.6" stroke="#333" stroke-width="0.7" stroke-linecap="round" />
<line x1="681.8" y1="294.0" x2="682.6" y2="290.1" stroke="#333" stroke-width="0.7" stroke-linecap="round" />
<line x1="684.1" y1="294.6" x2="685.3" y2="290.8" stroke="#333" stroke-width="0.7" stroke-linecap="round" />
<line x1="686.4" y1="295.5" x2="688.0" y2="291.8" stroke="#333" stroke-width="0.7" stroke-linecap="round" />
<line x1="688.5" y1="296.6" x2="690.5" y2="293.1" stroke="#333" stroke-width="0.7" stroke-linecap="round" />
<line x1="690.5" y1="297.9" x2="692.9" y2="294.7" stroke="#333" stroke-width="0.7" stroke-linecap="round" />
<line x1="692.4" y1="299.4" x2="695.1" y2="296.4" stroke="#333" stroke-width="0.7" stroke-linecap="round" />
<line x1="694.1" y1="301.1" x2="697.1" y2="298.4" stroke="#333" stroke-width="0.7" stroke-linecap="round" />
<line x1="695.6" y1="303.0" x2="698.8" y2="300.6" stroke="#333" stroke-width="0.7" stroke-linecap="round" />
<line x1="696.9" y1="305.0" x2="700.4" y2="303.0" stroke="#333" stroke-width="0.7" stroke-linecap="round" />
<line x1="698.0" y1="307.1" x2="701.7" y2="305.5" stroke="#333" stroke-width="0.7" stroke-linecap="round" />
<line x1="698.9" y1="309.4" x2="702.7" y2="308.2" stroke="#333" stroke-width="0.7" stroke-linecap="round" />
<line x1="699.5" y1="311.7" x2="703.4" y2="310.9" stroke="#333" stroke-width="0.7" stroke-linecap="round" />
<line x1="699.9" y1="314.1" x2="703.9" y2="313.7" stroke="#333" stroke-width="0.7" stroke-linecap="round" />
<path d="M687,292.5 A25 25 0 0 1 699,328.5" fill="none" stroke="#333" stroke-width="3" stroke-dasharray="1 1"/>
<circle cx="675.0" cy="319.5" r="20.0" fill="none" stroke="#555" stroke-width="0.8" />
<circle cx="678.0" cy="316.5" r="5.0" fill="#fff" stroke="#333" stroke-width="1.1" />
<circle cx="678.0" cy="316.5" r="2.6" fill="none" stroke="#333" stroke-width="0.8" />
<circle cx="673.0" cy="328.5" r="3.2" fill="none" stroke="#333" stroke-width="1.0" />
<ellipse cx="665.0" cy="316.5" rx="4.5" ry="8.0" transform="rotate(10 665.0 316.5)" fill="none" stroke="#555" stroke-width="0.9" />
<line x1="680.9" y1="321.1" x2="689.2" y2="331.1" stroke="#666" stroke-width="0.8" stroke-linecap="round" />
<line x1="673.8" y1="321.6" x2="666.9" y2="332.6" stroke="#666" stroke-width="0.8" stroke-linecap="round" />
<line x1="671.2" y1="315.0" x2="658.6" y2="311.9" stroke="#666" stroke-width="0.8" stroke-linecap="round" />
<line x1="676.6" y1="310.5" x2="675.7" y2="297.5" stroke="#666" stroke-width="0.8" stroke-linecap="round" />
<line x1="682.6" y1="314.3" x2="694.6" y2="309.4" stroke="#666" stroke-width="0.8" stroke-linecap="round" />
<circle cx="650.0" cy="343.0" r="5.0" fill="none" stroke="#555" stroke-width="0.9" />
<rect x="710" y="291" width="8" height="3" transform="rotate(35 710 291)" fill="none" stroke="#444" stroke-width="1"/>
<polyline points="712.0,306.0 722.0,304.0 732.0,318.0" fill="none" stroke="#555" stroke-width="0.9" stroke-linejoin="round" stroke-linecap="round" />
<polyline points="640.0,330.0 645.0,355.0 660.0,350.0" fill="none" stroke="#666" stroke-width="0.9" stroke-linejoin="round" stroke-linecap="round" />
<polyline points="313.0,398.0 369.0,365.0 430.0,330.0 520.0,290.0 560.0,270.0" fill="none" stroke="#c4c4c4" stroke-width="0.7" stroke-linejoin="round" stroke-linecap="round" stroke-dasharray="9 2.5 1.5 2.5"/>
<polyline points="398.0,440.0 470.0,400.0 520.0,380.0 600.0,340.0 660.0,312.0 748.0,272.0" fill="none" stroke="#c4c4c4" stroke-width="0.7" stroke-linejoin="round" stroke-linecap="round" stroke-dasharray="9 2.5 1.5 2.5"/>
<polyline points="350.0,552.0 440.0,505.0 505.0,468.0 560.0,440.0 620.0,410.0 700.0,378.0" fill="none" stroke="#c4c4c4" stroke-width="0.7" stroke-linejoin="round" stroke-linecap="round" stroke-dasharray="9 2.5 1.5 2.5"/>
<polyline points="298.0,579.0 360.0,545.0" fill="none" stroke="#c4c4c4" stroke-width="0.7" stroke-linejoin="round" stroke-linecap="round" stroke-dasharray="9 2.5 1.5 2.5"/>
<polyline points="405.0,527.0 470.0,488.0 520.0,462.0" fill="none" stroke="#c4c4c4" stroke-width="0.7" stroke-linejoin="round" stroke-linecap="round" stroke-dasharray="9 2.5 1.5 2.5"/>
<polyline points="400.0,475.0 460.0,440.0" fill="none" stroke="#c4c4c4" stroke-width="0.7" stroke-linejoin="round" stroke-linecap="round" stroke-dasharray="9 2.5 1.5 2.5"/>
<polyline points="535.0,531.0 600.0,500.0 700.0,450.0" fill="none" stroke="#c4c4c4" stroke-width="0.7" stroke-linejoin="round" stroke-linecap="round" stroke-dasharray="9 2.5 1.5 2.5"/>
<polyline points="674.0,240.0 674.0,447.0 620.0,480.0" fill="none" stroke="#b0b0b0" stroke-width="0.7" stroke-linejoin="round" stroke-linecap="round" stroke-dasharray="9 2.5 1.5 2.5"/>
<polyline points="573.0,236.0 570.0,300.0" fill="none" stroke="#aaa" stroke-width="0.7" stroke-linejoin="round" stroke-linecap="round" stroke-dasharray="9 2.5 1.5 2.5"/>
<path d="M497,472 C488,473 483,465 486,456 L498,434 C502,425 500,417 494,413 L432,374 C418,363 414,349 420,336 C424,327 432,322 441,323" fill="none" stroke="#333" stroke-width="5.6" stroke-linecap="butt" stroke-linejoin="round"/>
<path d="M497,472 C488,473 483,465 486,456 L498,434 C502,425 500,417 494,413 L432,374 C418,363 414,349 420,336 C424,327 432,322 441,323" fill="none" stroke="#9a9a9a" stroke-width="3.4" stroke-dasharray="0.9 0.8" stroke-linecap="butt" stroke-linejoin="round"/>
<path d="M440.5,323 C447,324 452,330 455,336 L493,393 C498,402 505,408 512,407" fill="none" stroke="#333" stroke-width="4.4" stroke-linecap="butt" stroke-linejoin="round"/>
<path d="M440.5,323 C447,324 452,330 455,336 L493,393 C498,402 505,408 512,407" fill="none" stroke="#fff" stroke-width="2.6" stroke-linecap="butt" stroke-linejoin="round"/>
<path d="M440.5,323 C447,324 452,330 455,336 L493,393 C498,402 505,408 512,407" fill="none" stroke="#777" stroke-width="1.0" stroke-dasharray="0.8 1.0" stroke-linecap="butt" stroke-linejoin="round" transform="translate(0.6,-0.6)"/>
<path d="M511,407.5 L578,346 C584,342 588,342 592,343" fill="none" stroke="#333" stroke-width="5.6" stroke-linecap="butt" stroke-linejoin="round"/>
<path d="M511,407.5 L578,346 C584,342 588,342 592,343" fill="none" stroke="#9a9a9a" stroke-width="3.4" stroke-dasharray="0.9 0.8" stroke-linecap="butt" stroke-linejoin="round"/>
<path d="M591,343 C603,346 611,355 612,367 C613,380 608,389 597,393.5" fill="none" stroke="#333" stroke-width="4.4" stroke-linecap="butt" stroke-linejoin="round"/>
<path d="M591,343 C603,346 611,355 612,367 C613,380 608,389 597,393.5" fill="none" stroke="#fff" stroke-width="2.6" stroke-linecap="butt" stroke-linejoin="round"/>
<path d="M591,343 C603,346 611,355 612,367 C613,380 608,389 597,393.5" fill="none" stroke="#777" stroke-width="1.0" stroke-dasharray="0.8 1.0" stroke-linecap="butt" stroke-linejoin="round" transform="translate(0.6,-0.6)"/>
<path d="M598,393 C585,397 560,396 541,397 C534,398 528,400 525,404" fill="none" stroke="#333" stroke-width="5.6" stroke-linecap="butt" stroke-linejoin="round"/>
<path d="M598,393 C585,397 560,396 541,397 C534,398 528,400 525,404" fill="none" stroke="#9a9a9a" stroke-width="3.4" stroke-dasharray="0.9 0.8" stroke-linecap="butt" stroke-linejoin="round"/>
<path d="M526,403 C522,408 521,413 519,419 L506,465 C504,470 500,473 496,472.5" fill="none" stroke="#333" stroke-width="4.4" stroke-linecap="butt" stroke-linejoin="round"/>
<path d="M526,403 C522,408 521,413 519,419 L506,465 C504,470 500,473 496,472.5" fill="none" stroke="#fff" stroke-width="2.6" stroke-linecap="butt" stroke-linejoin="round"/>
<path d="M526,403 C522,408 521,413 519,419 L506,465 C504,470 500,473 496,472.5" fill="none" stroke="#777" stroke-width="1.0" stroke-dasharray="0.8 1.0" stroke-linecap="butt" stroke-linejoin="round" transform="translate(0.6,-0.6)"/>
<polygon points="490.7,336.0 495.0,333.0 512.0,338.0 530.0,342.0 538.0,346.0 540.0,352.0 532.0,356.0 528.0,370.0 524.0,385.0 519.0,386.0 515.0,372.0 508.0,360.0 498.0,352.0 493.0,345.0" fill="#fff" stroke="#666" stroke-width="0.9" stroke-linejoin="round" />
<polyline points="494.0,338.0 512.0,342.0 514.0,350.0 496.0,348.0" fill="none" stroke="#555" stroke-width="0.9" stroke-linejoin="round" stroke-linecap="round" />
<circle cx="503.5" cy="351.0" r="2.6" fill="none" stroke="#777" stroke-width="0.8" />
<ellipse cx="520.0" cy="353.0" rx="4.0" ry="4.5" transform="rotate(0 520.0 353.0)" fill="none" stroke="#666" stroke-width="0.9" />
<ellipse cx="527.0" cy="352.0" rx="4.0" ry="4.5" transform="rotate(0 527.0 352.0)" fill="none" stroke="#666" stroke-width="0.9" />
<polyline points="510.0,352.0 520.0,381.0" fill="none" stroke="#888" stroke-width="0.8" stroke-linejoin="round" stroke-linecap="round" />
<polyline points="528.0,356.0 524.0,380.0" fill="none" stroke="#888" stroke-width="0.8" stroke-linejoin="round" stroke-linecap="round" />
<path d="M495,345 C498,362 505,372 515,378" fill="none" stroke="#aaa" stroke-width="0.7" stroke-linejoin="round" stroke-linecap="round" />
<rect x="503.5" y="315.5" width="4.5" height="20" rx="1.5" fill="#fff" stroke="#333" stroke-width="0.9"/>
<line x1="503.5" y1="318.0" x2="508.0" y2="318.0" stroke="#444" stroke-width="0.6" stroke-linecap="round" />
<line x1="503.5" y1="320.0" x2="508.0" y2="320.0" stroke="#444" stroke-width="0.6" stroke-linecap="round" />
<line x1="503.5" y1="322.0" x2="508.0" y2="322.0" stroke="#444" stroke-width="0.6" stroke-linecap="round" />
<line x1="503.5" y1="324.0" x2="508.0" y2="324.0" stroke="#444" stroke-width="0.6" stroke-linecap="round" />
<line x1="503.5" y1="326.0" x2="508.0" y2="326.0" stroke="#444" stroke-width="0.6" stroke-linecap="round" />
<line x1="503.5" y1="328.0" x2="508.0" y2="328.0" stroke="#444" stroke-width="0.6" stroke-linecap="round" />
<line x1="503.5" y1="330.0" x2="508.0" y2="330.0" stroke="#444" stroke-width="0.6" stroke-linecap="round" />
<line x1="503.5" y1="332.0" x2="508.0" y2="332.0" stroke="#444" stroke-width="0.6" stroke-linecap="round" />
<rect x="523" y="331" width="21" height="3.6" rx="1.8" transform="rotate(-22 523 331)" fill="#fff" stroke="#333" stroke-width="1"/>
<path d="M519,326 C518,321 522,318 526,321" fill="none" stroke="#333" stroke-width="1.2" stroke-linejoin="round" stroke-linecap="round" />
<path d="M535,345 C548,352 556,348 560,346" fill="none" stroke="#555" stroke-width="0.8" stroke-linejoin="round" stroke-linecap="round" />
<rect x="463" y="359" width="22" height="3.5" transform="rotate(-28 463 359)" fill="#fff" stroke="#333" stroke-width="1"/>
<circle cx="463.0" cy="363.0" r="2.8" fill="#fff" stroke="#333" stroke-width="1" />
<polygon points="325.5,378.0 328.0,369.7 336.3,363.9 349.6,361.4 359.6,357.3 367.9,354.8 376.2,357.3 382.8,362.2 387.8,373.0 391.0,384.7 396.0,388.8 395.0,396.0 396.0,406.0 392.8,416.0 384.5,422.8 383.6,425.3 353.0,437.8 352.0,433.0 325.5,393.8" fill="#fff" stroke="#2a2a2a" stroke-width="1.2" stroke-linejoin="round" />
<polyline points="352.0,433.0 384.0,421.0" fill="none" stroke="#333" stroke-width="0.9" stroke-linejoin="round" stroke-linecap="round" />
<polygon points="320.5,380.0 326.4,379.7 326.6,386.3 321.0,386.5" fill="#fff" stroke="#333" stroke-width="0.9" stroke-linejoin="round" />
<circle cx="344.0" cy="384.7" r="16.5" fill="none" stroke="#8a8a8a" stroke-width="0.7" />
<circle cx="344.0" cy="384.7" r="8.0" fill="none" stroke="#8a8a8a" stroke-width="0.7" />
<line x1="351.9" y1="386.1" x2="359.8" y2="387.5" stroke="#8a8a8a" stroke-width="0.7" stroke-linecap="round" />
<line x1="347.9" y1="391.7" x2="351.8" y2="398.7" stroke="#8a8a8a" stroke-width="0.7" stroke-linecap="round" />
<line x1="341.0" y1="392.1" x2="338.0" y2="399.5" stroke="#8a8a8a" stroke-width="0.7" stroke-linecap="round" />
<line x1="336.3" y1="387.0" x2="328.7" y2="389.4" stroke="#8a8a8a" stroke-width="0.7" stroke-linecap="round" />
<line x1="337.4" y1="380.2" x2="330.7" y2="375.8" stroke="#8a8a8a" stroke-width="0.7" stroke-linecap="round" />
<line x1="343.3" y1="376.7" x2="342.6" y2="368.8" stroke="#8a8a8a" stroke-width="0.7" stroke-linecap="round" />
<line x1="349.8" y1="379.1" x2="355.5" y2="373.6" stroke="#8a8a8a" stroke-width="0.7" stroke-linecap="round" />
<polyline points="366.0,361.0 378.0,395.0 382.0,420.0" fill="none" stroke="#8a8a8a" stroke-width="0.7" stroke-linejoin="round" stroke-linecap="round" />
<polyline points="355.0,362.0 368.0,395.0" fill="none" stroke="#8a8a8a" stroke-width="0.7" stroke-linejoin="round" stroke-linecap="round" />
<circle cx="368.0" cy="364.0" r="3.0" fill="none" stroke="#8a8a8a" stroke-width="0.8" />
<circle cx="389.0" cy="390.0" r="4.0" fill="none" stroke="#8a8a8a" stroke-width="0.8" />
<circle cx="357.0" cy="405.0" r="3.0" fill="none" stroke="#8a8a8a" stroke-width="0.8" />
<circle cx="307.5" cy="400.5" r="3.0" fill="#fff" stroke="#333" stroke-width="1" />
<rect x="309" y="397" width="7" height="3" transform="rotate(-30 309 397)" fill="#fff" stroke="#333" stroke-width="0.9"/>
<circle cx="392.0" cy="438.6" r="2.8" fill="#fff" stroke="#333" stroke-width="1" />
<rect x="394" y="435.5" width="20" height="3.2" transform="rotate(-30 394 435.5)" fill="#fff" stroke="#333" stroke-width="0.9"/>
<polygon points="428.5,417.0 434.5,414.0 439.0,416.0 438.0,421.0 447.0,421.0 449.0,428.0 444.0,431.0 438.0,430.0 436.0,433.0 431.0,434.0 429.5,431.0" fill="#fff" stroke="#333" stroke-width="1.1" stroke-linejoin="round" />
<circle cx="443.8" cy="425.5" r="3.6" fill="#fff" stroke="#333" stroke-width="0.9" />
<circle cx="443.8" cy="425.5" r="1.5" fill="none" stroke="#555" stroke-width="0.7" />
<circle cx="431.6" cy="416.0" r="3.2" fill="#fff" stroke="#222" stroke-width="1.2" />
<rect x="437.5" y="409" width="3.5" height="6.5" rx="1" fill="#fff" stroke="#333" stroke-width="0.9"/>
<line x1="432.0" y1="420.0" x2="433.5" y2="432.0" stroke="#666" stroke-width="0.7" stroke-linecap="round" />
<circle cx="469.0" cy="433.5" r="5.6" fill="#fff" stroke="#333" stroke-width="1.1" />
<circle cx="469.0" cy="434.0" r="1.3" fill="none" stroke="#555" stroke-width="0.6" />
<polygon points="419.0,439.6 427.3,437.0 445.0,437.6 452.0,446.5 450.6,454.7 441.0,458.8 427.3,463.6 423.2,458.8 421.9,452.0" fill="#fff" stroke="#333" stroke-width="1.1" stroke-linejoin="round" />
<ellipse cx="437.0" cy="450.0" rx="8.0" ry="9.0" transform="rotate(0 437.0 450.0)" fill="none" stroke="#333" stroke-width="1" />
<ellipse cx="437.0" cy="450.0" rx="4.0" ry="4.5" transform="rotate(0 437.0 450.0)" fill="none" stroke="#333" stroke-width="0.9" />
<circle cx="437.0" cy="450.0" r="1.5" fill="none" stroke="#333" stroke-width="0.7" />
<circle cx="425.0" cy="459.0" r="2.5" fill="none" stroke="#555" stroke-width="0.8" />
<polygon points="365.2,472.0 381.0,464.6 389.0,470.0 397.8,484.6 411.4,468.8 420.9,467.8 427.2,473.0 450.3,474.0 444.0,484.6 423.0,497.2 414.6,514.0 410.4,530.8 402.0,535.0 389.4,528.7 385.2,518.2 368.4,511.9 366.3,493.0" fill="#fff" stroke="#2a2a2a" stroke-width="1.2" stroke-linejoin="round" />
<ellipse cx="397.8" cy="518.0" rx="9.0" ry="10.5" transform="rotate(0 397.8 518.0)" fill="#fff" stroke="#333" stroke-width="1.1" />
<ellipse cx="397.0" cy="518.0" rx="6.5" ry="8.0" transform="rotate(0 397.0 518.0)" fill="none" stroke="#555" stroke-width="0.8" />
<polyline points="384.0,484.0 392.0,500.0 408.0,500.0 413.0,488.0" fill="none" stroke="#8a8a8a" stroke-width="0.7" stroke-linejoin="round" stroke-linecap="round" />
<circle cx="376.0" cy="486.0" r="2.5" fill="none" stroke="#8a8a8a" stroke-width="0.7" />
<circle cx="379.0" cy="499.0" r="3.0" fill="none" stroke="#8a8a8a" stroke-width="0.7" />
<polyline points="425.0,485.0 440.0,480.0" fill="none" stroke="#8a8a8a" stroke-width="0.7" stroke-linejoin="round" stroke-linecap="round" />
<circle cx="433.0" cy="487.0" r="2.2" fill="none" stroke="#8a8a8a" stroke-width="0.7" />
<line x1="392.0" y1="492.0" x2="406.0" y2="492.0" stroke="#888" stroke-width="0.6" stroke-linecap="round" />
<line x1="392.0" y1="495.0" x2="406.0" y2="495.0" stroke="#888" stroke-width="0.6" stroke-linecap="round" />
<line x1="392.0" y1="498.0" x2="406.0" y2="498.0" stroke="#888" stroke-width="0.6" stroke-linecap="round" />
<line x1="392.0" y1="501.0" x2="406.0" y2="501.0" stroke="#888" stroke-width="0.6" stroke-linecap="round" />
<line x1="392.0" y1="504.0" x2="406.0" y2="504.0" stroke="#888" stroke-width="0.6" stroke-linecap="round" />
<circle cx="397.8" cy="477.2" r="4.0" fill="#fff" stroke="#333" stroke-width="1.1" />
<rect x="400" y="472" width="12" height="4.5" transform="rotate(-30 400 472)" fill="#fff" stroke="#333" stroke-width="0.9"/>
<path d="M466,470.5 L476,467.5 A8.5 10.5 0 0 1 478,488.5 L468,491.5 Z" fill="#b8b8b8" stroke="#333" stroke-width="1.1"/>
<path d="M466.0,470.5 L468.0,491.5" stroke="#555" stroke-width="0.5"/>
<path d="M466.9,470.2 L468.9,491.2" stroke="#555" stroke-width="0.5"/>
<path d="M467.9,470.0 L469.9,491.0" stroke="#555" stroke-width="0.5"/>
<path d="M468.9,469.8 L470.9,490.8" stroke="#555" stroke-width="0.5"/>
<path d="M469.8,469.5 L471.8,490.5" stroke="#555" stroke-width="0.5"/>
<path d="M470.8,469.2 L472.8,490.2" stroke="#555" stroke-width="0.5"/>
<path d="M471.7,469.0 L473.7,490.0" stroke="#555" stroke-width="0.5"/>
<path d="M472.6,468.8 L474.6,489.8" stroke="#555" stroke-width="0.5"/>
<path d="M473.6,468.5 L475.6,489.5" stroke="#555" stroke-width="0.5"/>
<path d="M474.6,468.2 L476.6,489.2" stroke="#555" stroke-width="0.5"/>
<path d="M475.5,468.0 L477.5,489.0" stroke="#555" stroke-width="0.5"/>
<path d="M476.4,467.8 L478.4,488.8" stroke="#555" stroke-width="0.5"/>
<path d="M476,467.5 A8.5 10.5 0 0 1 478,488.5" fill="none" stroke="#333" stroke-width="3" stroke-dasharray="0.8 0.8"/>
<ellipse cx="467.0" cy="481.0" rx="9.0" ry="10.5" transform="rotate(-8 467.0 481.0)" fill="#fff" stroke="#222" stroke-width="1.3" />
<ellipse cx="467.0" cy="481.0" rx="5.0" ry="6.0" transform="rotate(-8 467.0 481.0)" fill="none" stroke="#444" stroke-width="0.9" />
<circle cx="467.0" cy="481.0" r="2.2" fill="none" stroke="#444" stroke-width="0.8" />
<path d="M540,408 L553,403 A9 10 0 0 1 556,422 L542,427 Z" fill="#fff" stroke="#333" stroke-width="1"/>
<ellipse cx="540.0" cy="417.5" rx="9.0" ry="10.0" transform="rotate(0 540.0 417.5)" fill="#fff" stroke="#333" stroke-width="1.1" />
<ellipse cx="540.0" cy="417.5" rx="6.5" ry="7.5" transform="rotate(0 540.0 417.5)" fill="none" stroke="#888" stroke-width="0.6" />
<circle cx="510.0" cy="437.0" r="2.8" fill="#fff" stroke="#333" stroke-width="1" />
<rect x="512" y="433" width="14" height="3" transform="rotate(-30 512 433)" fill="#fff" stroke="#333" stroke-width="0.9"/>
<polyline points="568.0,430.0 575.0,425.0 585.0,440.0" fill="none" stroke="#777" stroke-width="0.8" stroke-linejoin="round" stroke-linecap="round" />
<polyline points="562.0,444.0 566.0,434.0" fill="none" stroke="#777" stroke-width="0.8" stroke-linejoin="round" stroke-linecap="round" />
<polygon points="511.3,508.4 528.4,482.8 537.0,460.0 554.0,442.9 568.4,440.0 585.5,451.4 594.0,452.8 619.7,482.8 616.8,497.0 599.7,511.3 559.8,522.7 554.0,525.5 548.4,527.0 517.0,514.0" fill="#fff" stroke="#2a2a2a" stroke-width="1.3" stroke-linejoin="round" />
<circle cx="574.0" cy="487.0" r="22.8" fill="none" stroke="#666" stroke-width="0.8" />
<circle cx="574.0" cy="487.0" r="19.0" fill="none" stroke="#8a8a8a" stroke-width="0.7" />
<circle cx="574.0" cy="487.0" r="8.5" fill="none" stroke="#666" stroke-width="0.8" />
<line x1="582.5" y1="487.7" x2="592.9" y2="488.7" stroke="#777" stroke-width="0.8" stroke-linecap="round" />
<line x1="580.4" y1="492.6" x2="588.3" y2="499.5" stroke="#777" stroke-width="0.8" stroke-linecap="round" />
<line x1="575.9" y1="495.3" x2="578.3" y2="505.5" stroke="#777" stroke-width="0.8" stroke-linecap="round" />
<line x1="570.7" y1="494.8" x2="566.6" y2="504.5" stroke="#777" stroke-width="0.8" stroke-linecap="round" />
<line x1="566.7" y1="491.4" x2="557.7" y2="496.8" stroke="#777" stroke-width="0.8" stroke-linecap="round" />
<line x1="565.5" y1="486.3" x2="555.1" y2="485.3" stroke="#777" stroke-width="0.8" stroke-linecap="round" />
<line x1="567.6" y1="481.4" x2="559.7" y2="474.5" stroke="#777" stroke-width="0.8" stroke-linecap="round" />
<line x1="572.1" y1="478.7" x2="569.7" y2="468.5" stroke="#777" stroke-width="0.8" stroke-linecap="round" />
<line x1="577.3" y1="479.2" x2="581.4" y2="469.5" stroke="#777" stroke-width="0.8" stroke-linecap="round" />
<line x1="581.3" y1="482.6" x2="590.3" y2="477.2" stroke="#777" stroke-width="0.8" stroke-linecap="round" />
<circle cx="553.0" cy="450.0" r="3.5" fill="none" stroke="#777" stroke-width="0.8" />
<circle cx="612.0" cy="484.0" r="3.0" fill="none" stroke="#777" stroke-width="0.8" />
<polyline points="537.0,465.0 548.0,460.0 560.0,455.0" fill="none" stroke="#8a8a8a" stroke-width="0.7" stroke-linejoin="round" stroke-linecap="round" />
<circle cx="566.0" cy="524.0" r="3.0" fill="none" stroke="#666" stroke-width="0.8" />
<circle cx="531.3" cy="531.2" r="2.6" fill="#fff" stroke="#333" stroke-width="1" />
<rect x="533" y="528.5" width="6" height="2.8" transform="rotate(-25 533 528.5)" fill="#fff" stroke="#333" stroke-width="0.8"/>
<ellipse cx="359.0" cy="544.0" rx="28.4" ry="31.6" transform="rotate(18 359.0 544.0)" fill="#fff" stroke="#333" stroke-width="1.4" />
<ellipse cx="362.5" cy="542.0" rx="25.5" ry="29.5" transform="rotate(18 362.5 542.0)" fill="none" stroke="#444" stroke-width="1.1" />
<path d="M384,527 C390,545 386,565 372,573" fill="none" stroke="#666" stroke-width="2.2"/>
<ellipse cx="356.5" cy="545.0" rx="20.5" ry="24.5" transform="rotate(18 356.5 545.0)" fill="none" stroke="#bdbdbd" stroke-width="3.2" />
<ellipse cx="356.5" cy="545.0" rx="22.0" ry="26.0" transform="rotate(18 356.5 545.0)" fill="none" stroke="#666" stroke-width="0.8" />
<ellipse cx="356.5" cy="545.0" rx="19.0" ry="23.0" transform="rotate(18 356.5 545.0)" fill="none" stroke="#777" stroke-width="0.8" />
<path d="M364.3,550.0 Q366.7,557.5 363.4,562.1" fill="none" stroke="#999" stroke-width="1.4" stroke-linejoin="round" stroke-linecap="round" />
<path d="M354.6,554.8 Q349.2,559.8 344.9,558.1" fill="none" stroke="#999" stroke-width="1.4" stroke-linejoin="round" stroke-linecap="round" />
<path d="M347.5,546.0 Q341.8,541.7 342.4,536.0" fill="none" stroke="#999" stroke-width="1.4" stroke-linejoin="round" stroke-linecap="round" />
<path d="M352.8,535.9 Q354.7,528.1 359.4,526.3" fill="none" stroke="#999" stroke-width="1.4" stroke-linejoin="round" stroke-linecap="round" />
<path d="M363.2,538.3 Q370.1,537.9 372.4,542.5" fill="none" stroke="#999" stroke-width="1.4" stroke-linejoin="round" stroke-linecap="round" />
<ellipse cx="361.0" cy="542.0" rx="6.5" ry="7.0" transform="rotate(0 361.0 542.0)" fill="#fff" stroke="#555" stroke-width="1.0" />
<circle cx="361.0" cy="542.0" r="2.6" fill="none" stroke="#555" stroke-width="0.9" />
<rect x="291" y="576" width="22" height="7.5" transform="rotate(-30 291 576)" fill="#fff" stroke="#333" stroke-width="1"/>
<polygon points="285.5,578 290,575 295,577 296,583 291.5,586.5 286.5,584.5" fill="#fff" stroke="#333" stroke-width="1.1"/>
<circle cx="291.0" cy="580.8" r="1.6" fill="none" stroke="#333" stroke-width="0.7" />
<line x1="309.0" y1="280.8" x2="308.5" y2="391.5" stroke="#222" stroke-width="0.9" stroke-linecap="round" />
<polygon points="308.5,396.0 306.6,391.5 310.4,391.5" fill="#222"/>
<line x1="473.9" y1="235.9" x2="474.0" y2="350.5" stroke="#222" stroke-width="0.9" stroke-linecap="round" />
<polygon points="474.0,355.0 472.1,350.5 475.9,350.5" fill="#222"/>
<line x1="436.8" y1="287.8" x2="443.1" y2="320.6" stroke="#222" stroke-width="0.9" stroke-linecap="round" />
<polygon points="444.0,325.0 441.3,320.9 445.0,320.2" fill="#222"/>
<line x1="495.5" y1="300.0" x2="499.0" y2="331.0" stroke="#222" stroke-width="0.9" stroke-linecap="round" />
<polygon points="499.5,335.5 497.1,331.2 500.9,330.8" fill="#222"/>
<line x1="337.0" y1="338.5" x2="347.2" y2="357.5" stroke="#222" stroke-width="0.9" stroke-linecap="round" />
<polygon points="349.3,361.5 345.5,358.4 348.8,356.6" fill="#222"/>
<line x1="369.5" y1="333.5" x2="428.3" y2="410.0" stroke="#222" stroke-width="0.9" stroke-linecap="round" />
<polygon points="431.0,413.6 426.8,411.2 429.8,408.9" fill="#222"/>
<line x1="384.7" y1="322.7" x2="463.2" y2="423.5" stroke="#222" stroke-width="0.9" stroke-linecap="round" />
<polygon points="466.0,427.0 461.7,424.6 464.7,422.3" fill="#222"/>
<line x1="316.4" y1="445.3" x2="383.5" y2="438.3" stroke="#222" stroke-width="0.9" stroke-linecap="round" />
<polygon points="388.0,437.8 383.7,440.1 383.3,436.4" fill="#222"/>
<line x1="395.7" y1="452.0" x2="417.0" y2="449.5" stroke="#222" stroke-width="0.9" stroke-linecap="round" />
<polygon points="421.5,449.0 417.2,451.4 416.8,447.6" fill="#222"/>
<polyline points="336.9,469.9 381.0,458.3" fill="none" stroke="#222" stroke-width="0.9" stroke-linejoin="round" stroke-linecap="round" />
<line x1="381.0" y1="458.3" x2="395.4" y2="469.3" stroke="#222" stroke-width="0.9" stroke-linecap="round" />
<polygon points="399.0,472.0 394.3,470.8 396.6,467.8" fill="#222"/>
<line x1="447.0" y1="534.0" x2="420.1" y2="521.9" stroke="#222" stroke-width="0.9" stroke-linecap="round" />
<polygon points="416.0,520.0 420.9,520.1 419.3,523.6" fill="#222"/>
<line x1="414.6" y1="566.5" x2="389.2" y2="553.8" stroke="#222" stroke-width="0.9" stroke-linecap="round" />
<polygon points="385.2,551.8 390.1,552.1 388.4,555.5" fill="#222"/>
<line x1="381.0" y1="599.0" x2="308.7" y2="580.1" stroke="#222" stroke-width="0.9" stroke-linecap="round" />
<polygon points="304.3,579.0 309.1,578.3 308.2,582.0" fill="#222"/>
<line x1="481.4" y1="511.3" x2="475.7" y2="491.3" stroke="#222" stroke-width="0.9" stroke-linecap="round" />
<polygon points="474.5,487.0 477.5,490.8 473.9,491.8" fill="#222"/>
<line x1="502.8" y1="557.0" x2="520.8" y2="436.5" stroke="#222" stroke-width="0.9" stroke-linecap="round" />
<polygon points="521.5,432.0 522.7,436.7 519.0,436.2" fill="#222"/>
<line x1="639.6" y1="507.0" x2="611.2" y2="499.6" stroke="#222" stroke-width="0.9" stroke-linecap="round" />
<polygon points="606.8,498.5 611.6,497.8 610.7,501.5" fill="#222"/>
<line x1="628.2" y1="555.5" x2="538.9" y2="532.3" stroke="#222" stroke-width="0.9" stroke-linecap="round" />
<polygon points="534.5,531.2 539.3,530.5 538.4,534.2" fill="#222"/>
<polyline points="673.2,457.6 607.0,445.8 580.0,432.4" fill="none" stroke="#222" stroke-width="0.9" stroke-linejoin="round" stroke-linecap="round" />
<line x1="580.0" y1="432.4" x2="556.0" y2="420.1" stroke="#222" stroke-width="0.9" stroke-linecap="round" />
<polygon points="552.0,418.0 556.9,418.4 555.1,421.7" fill="#222"/>
<text x="429" y="215.6" font-size="9.2" font-weight="bold" fill="#222" stroke="#222" stroke-width="0.25" text-anchor="start" textLength="47.6" lengthAdjust="spacingAndGlyphs">58.8 ~ 68.6</text>
<text x="428.6" y="226.8" font-size="9.2" font-weight="bold" fill="#222" stroke="#222" stroke-width="0.25" text-anchor="start" textLength="96.6" lengthAdjust="spacingAndGlyphs">(6.0 ~ 7.0, 43.4 ~ 50.6)</text>
<text x="274.4" y="262.5" font-size="9.2" font-weight="bold" fill="#222" stroke="#222" stroke-width="0.25" text-anchor="start" textLength="42" lengthAdjust="spacingAndGlyphs">9.8 ~ 11.8</text>
<text x="273.7" y="273.7" font-size="9.2" font-weight="bold" fill="#222" stroke="#222" stroke-width="0.25" text-anchor="start" textLength="86.2" lengthAdjust="spacingAndGlyphs">(1.0 ~ 1.2, 7.2 ~ 8.7)</text>
<text x="262.3" y="445.7" font-size="9.2" font-weight="bold" fill="#222" stroke="#222" stroke-width="0.25" text-anchor="start" textLength="46.8" lengthAdjust="spacingAndGlyphs">19.6 ~ 26.5</text>
<text x="262.3" y="456.4" font-size="9.2" font-weight="bold" fill="#222" stroke="#222" stroke-width="0.25" text-anchor="start" textLength="95.5" lengthAdjust="spacingAndGlyphs">(2.0 ~ 2.7, 14.5 ~ 19.5)</text>
<text x="311.7" y="480" font-size="9.2" font-weight="bold" fill="#222" stroke="#222" stroke-width="0.25" text-anchor="start" textLength="47.2" lengthAdjust="spacingAndGlyphs">34.3 ~ 53.9</text>
<text x="262.3" y="490.9" font-size="9.2" font-weight="bold" fill="#222" stroke="#222" stroke-width="0.25" text-anchor="start" textLength="96.6" lengthAdjust="spacingAndGlyphs">(3.5 ~ 5.5, 25.3 ~ 39.8)</text>
<text x="383.8" y="603.2" font-size="9.2" font-weight="bold" fill="#222" stroke="#222" stroke-width="0.25" text-anchor="start" textLength="58.5" lengthAdjust="spacingAndGlyphs">230.5 ~ 240.3</text>
<text x="383.3" y="614.8" font-size="9.2" font-weight="bold" fill="#222" stroke="#222" stroke-width="0.25" text-anchor="start" textLength="118" lengthAdjust="spacingAndGlyphs">(23.5 ~ 24.5, 170.0 ~ 177.2)</text>
<text x="485.7" y="569.7" font-size="9.2" font-weight="bold" fill="#222" stroke="#222" stroke-width="0.25" text-anchor="start" textLength="47" lengthAdjust="spacingAndGlyphs">49.0 ~ 58.8</text>
<text x="485.7" y="582.3" font-size="9.2" font-weight="bold" fill="#222" stroke="#222" stroke-width="0.25" text-anchor="start" textLength="95.5" lengthAdjust="spacingAndGlyphs">(5.0 ~ 6.0, 36.2 ~ 43.4)</text>
<text x="634" y="554" font-size="9.2" font-weight="bold" fill="#222" stroke="#222" stroke-width="0.25" text-anchor="start" textLength="42.8" lengthAdjust="spacingAndGlyphs">9.8 ~ 11.8</text>
<text x="634" y="566.9" font-size="9.2" font-weight="bold" fill="#222" stroke="#222" stroke-width="0.25" text-anchor="start" textLength="85.5" lengthAdjust="spacingAndGlyphs">(1.0 ~ 1.2, 7.2 ~ 8.7)</text>
<text x="254.2" y="651" font-size="9.2" font-weight="bold" fill="#222" stroke="#222" stroke-width="0.25" text-anchor="start" textLength="113.8" lengthAdjust="spacingAndGlyphs">Torque : N.m (kgf.m, lb-ft)</text>
<text x="433" y="282.7" font-size="9.6" font-weight="normal" fill="#2a2a2a" stroke="#2a2a2a" stroke-width="0.2" text-anchor="start">2</text>
<text x="377" y="320.8" font-size="9.6" font-weight="normal" fill="#2a2a2a" stroke="#2a2a2a" stroke-width="0.2" text-anchor="start">3</text>
<text x="363.8" y="330.5" font-size="9.6" font-weight="normal" fill="#2a2a2a" stroke="#2a2a2a" stroke-width="0.2" text-anchor="start">4</text>
<text x="332" y="336" font-size="9.6" font-weight="normal" fill="#2a2a2a" stroke="#2a2a2a" stroke-width="0.2" text-anchor="start">5</text>
<text x="492.8" y="297.5" font-size="9.6" font-weight="normal" fill="#2a2a2a" stroke="#2a2a2a" stroke-width="0.2" text-anchor="start">1</text>
<text x="385.5" y="457.5" font-size="9.6" font-weight="normal" fill="#2a2a2a" stroke="#2a2a2a" stroke-width="0.2" text-anchor="start">6</text>
<text x="676.3" y="462" font-size="9.6" font-weight="normal" fill="#2a2a2a" stroke="#2a2a2a" stroke-width="0.2" text-anchor="start">7</text>
<text x="644" y="512.3" font-size="9.6" font-weight="normal" fill="#2a2a2a" stroke="#2a2a2a" stroke-width="0.2" text-anchor="start">8</text>
<text x="480.3" y="521.5" font-size="9.6" font-weight="normal" fill="#2a2a2a" stroke="#2a2a2a" stroke-width="0.2" text-anchor="start">9</text>
<text x="448.3" y="542.5" font-size="9.6" font-weight="normal" fill="#2a2a2a" stroke="#2a2a2a" stroke-width="0.2" text-anchor="start">10</text>
<text x="416.5" y="573.7" font-size="9.6" font-weight="normal" fill="#2a2a2a" stroke="#2a2a2a" stroke-width="0.2" text-anchor="start">11</text></g></svg></div>
  <table class="parts"><tr>
   <td>1. Engine support bracket<br>2. Timing belt<br>3. Tensioner arm assembly washer<br>4. Timing belt auto tensioner</td>
   <td>5. Bank 1 timing belt upper cover<br>6. Timing belt tensioner arm assembly<br>7. Idler pulley<br>8. Bank 2 timing belt upper cover</td>
   <td>9. Crankshaft sprocket<br>10. Timing belt lower cover<br>11. Damper pulley</td>
  </tr></table>
  <div class="bar" style="top:660px">Components</div>
  <div class="imgbox" style="top:688.5px" id="img2"><svg class="dg" width="1024" height="1024" viewBox="0 0 1024 1024"><use href="#diag"/></svg></div>
</div>
<div id="cline"></div>
<div id="rightbar"></div>
</body></html>
